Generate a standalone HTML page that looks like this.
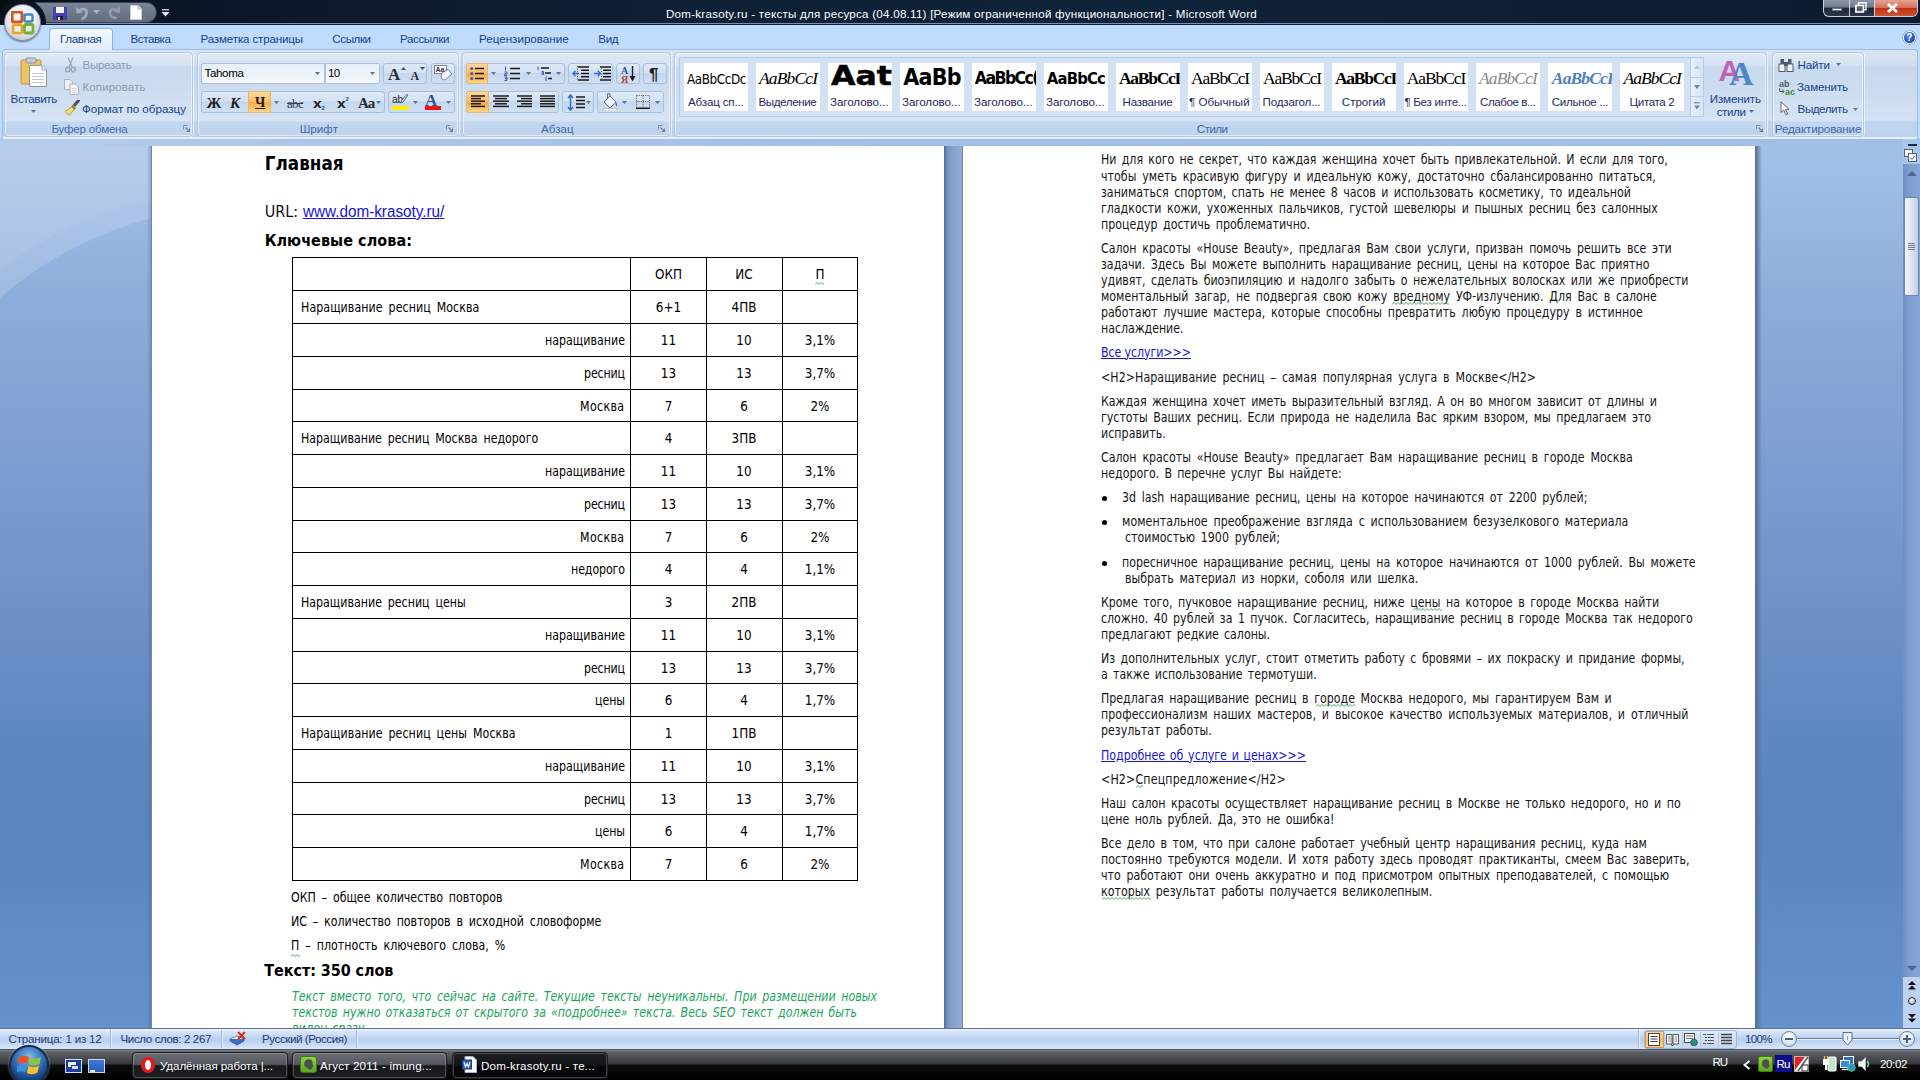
<!DOCTYPE html><html><head><meta charset="utf-8"><title>Dom-krasoty.ru - Microsoft Word</title><style>html,body{margin:0;padding:0}body{width:1920px;height:1080px;overflow:hidden;position:relative;background:#bfdbff;font-family:"Liberation Sans",sans-serif}div,span,svg{box-sizing:border-box}</style></head><body><div style="position:absolute;left:0px;top:138px;width:1920px;height:890px;background:linear-gradient(#9ebce5 0,#a3c0e7 8px,#9dbbe4 60px,#8dadda 160px,#7799cc 380px,#5f88c0 600px,#5a84bd 680px,#5f8ac4 780px,#6692cc 890px)"></div><svg style="position:absolute;left:0px;top:146px;" width="152" height="260" viewBox="0 0 152 260"><path d="M0 0 H152 V72 C105 84 48 110 0 152 Z" fill="rgba(255,255,255,.17)"/><path d="M0 0 H152 V54 C100 64 40 92 0 124 Z" fill="rgba(255,255,255,.06)"/></svg><div style="position:absolute;left:0px;top:138px;width:1920px;height:8px;background:linear-gradient(90deg,rgba(255,255,255,.22) 0,rgba(255,255,255,.12) 300px,rgba(255,255,255,0) 900px)"></div><div style="position:absolute;left:151px;top:146px;width:794px;height:882px;background:#fff;border-left:1px solid #6f86ad;border-right:1px solid #5a7095"></div><div style="position:absolute;left:962px;top:146px;width:794px;height:882px;background:#fff;border-left:1px solid #6f86ad;border-right:1px solid #5a7095"></div><div style="position:absolute;left:945px;top:146px;width:17px;height:882px;background:linear-gradient(90deg,#5f769c 0,#7a96c2 3px,#87a3cf 9px,#8fabd6 100%)"></div><div style="position:absolute;left:1756px;top:146px;width:6px;height:882px;background:linear-gradient(90deg,#5a7199 0,rgba(110,140,190,.0) 100%)"></div><div style="position:absolute;left:147px;top:146px;width:4px;height:882px;background:linear-gradient(270deg,rgba(70,95,140,.35) 0,rgba(70,95,140,0) 100%)"></div><span style="position:absolute;left:264.70px;top:155.20px;font:normal bold 18.67px 'DejaVu Sans Condensed', 'DejaVu Sans', sans-serif;line-height:1;white-space:pre;color:#000;letter-spacing:0.051px;">Главная</span><span style="position:absolute;left:264.70px;top:203.80px;font:normal normal 16px 'DejaVu Sans Condensed', 'DejaVu Sans', sans-serif;line-height:1;white-space:pre;color:#111;letter-spacing:0.023px;">URL:</span><span style="position:absolute;left:302.50px;top:203.80px;font:normal normal 16px 'Liberation Sans', sans-serif;line-height:1;white-space:pre;color:#1515d0;letter-spacing:-0.012px;transform:scaleX(0.955);transform-origin:0 0;text-decoration:underline">www.dom-krasoty.ru/</span><span style="position:absolute;left:264.70px;top:232.70px;font:normal bold 16px 'DejaVu Sans Condensed', 'DejaVu Sans', sans-serif;line-height:1;white-space:pre;color:#000;letter-spacing:0.060px;">Ключевые слова:</span><div style="position:absolute;left:292px;top:257px;width:566px;height:1px;background:#000"></div><div style="position:absolute;left:292px;top:290px;width:566px;height:1px;background:#000"></div><div style="position:absolute;left:292px;top:323px;width:566px;height:1px;background:#000"></div><div style="position:absolute;left:292px;top:356px;width:566px;height:1px;background:#000"></div><div style="position:absolute;left:292px;top:389px;width:566px;height:1px;background:#000"></div><div style="position:absolute;left:292px;top:421px;width:566px;height:1px;background:#000"></div><div style="position:absolute;left:292px;top:454px;width:566px;height:1px;background:#000"></div><div style="position:absolute;left:292px;top:487px;width:566px;height:1px;background:#000"></div><div style="position:absolute;left:292px;top:520px;width:566px;height:1px;background:#000"></div><div style="position:absolute;left:292px;top:552px;width:566px;height:1px;background:#000"></div><div style="position:absolute;left:292px;top:585px;width:566px;height:1px;background:#000"></div><div style="position:absolute;left:292px;top:618px;width:566px;height:1px;background:#000"></div><div style="position:absolute;left:292px;top:651px;width:566px;height:1px;background:#000"></div><div style="position:absolute;left:292px;top:683px;width:566px;height:1px;background:#000"></div><div style="position:absolute;left:292px;top:716px;width:566px;height:1px;background:#000"></div><div style="position:absolute;left:292px;top:749px;width:566px;height:1px;background:#000"></div><div style="position:absolute;left:292px;top:782px;width:566px;height:1px;background:#000"></div><div style="position:absolute;left:292px;top:814px;width:566px;height:1px;background:#000"></div><div style="position:absolute;left:292px;top:847px;width:566px;height:1px;background:#000"></div><div style="position:absolute;left:292px;top:880px;width:566px;height:1px;background:#000"></div><div style="position:absolute;left:292px;top:257px;width:1px;height:624px;background:#000"></div><div style="position:absolute;left:630px;top:257px;width:1px;height:624px;background:#000"></div><div style="position:absolute;left:706px;top:257px;width:1px;height:624px;background:#000"></div><div style="position:absolute;left:782px;top:257px;width:1px;height:624px;background:#000"></div><div style="position:absolute;left:857px;top:257px;width:1px;height:624px;background:#000"></div><span style="position:absolute;left:655.02px;top:267.80px;font:normal normal 13.33px 'DejaVu Sans Condensed', 'DejaVu Sans', sans-serif;line-height:1;white-space:pre;color:#000;">ОКП</span><span style="position:absolute;left:735.33px;top:267.80px;font:normal normal 13.33px 'DejaVu Sans Condensed', 'DejaVu Sans', sans-serif;line-height:1;white-space:pre;color:#000;">ИС</span><span style="position:absolute;left:815.48px;top:267.80px;font:normal normal 13.33px 'DejaVu Sans Condensed', 'DejaVu Sans', sans-serif;line-height:1;white-space:pre;color:#000;">П</span><span style="position:absolute;left:301.30px;top:301.00px;font:normal normal 13.33px 'DejaVu Sans Condensed', 'DejaVu Sans', sans-serif;line-height:1;white-space:pre;color:#000;letter-spacing:0.085px;word-spacing:2.500px;transform:scaleX(0.92);transform-origin:0 0;">Наращивание ресниц Москва</span><span style="position:absolute;left:655.84px;top:300.80px;font:normal normal 13.33px 'DejaVu Sans Condensed', 'DejaVu Sans', sans-serif;line-height:1;white-space:pre;color:#000;">6+1</span><span style="position:absolute;left:731.56px;top:300.80px;font:normal normal 13.33px 'DejaVu Sans Condensed', 'DejaVu Sans', sans-serif;line-height:1;white-space:pre;color:#000;">4ПВ</span><span style="position:absolute;left:544.70px;top:334.00px;font:normal normal 13.33px 'DejaVu Sans Condensed', 'DejaVu Sans', sans-serif;line-height:1;white-space:pre;color:#000;letter-spacing:0.026px;transform:scaleX(0.92);transform-origin:0 0;">наращивание</span><span style="position:absolute;left:660.87px;top:333.80px;font:normal normal 13.33px 'DejaVu Sans Condensed', 'DejaVu Sans', sans-serif;line-height:1;white-space:pre;color:#000;">11</span><span style="position:absolute;left:736.37px;top:333.80px;font:normal normal 13.33px 'DejaVu Sans Condensed', 'DejaVu Sans', sans-serif;line-height:1;white-space:pre;color:#000;">10</span><span style="position:absolute;left:804.77px;top:333.80px;font:normal normal 13.33px 'DejaVu Sans Condensed', 'DejaVu Sans', sans-serif;line-height:1;white-space:pre;color:#000;">3,1%</span><span style="position:absolute;left:583.70px;top:367.00px;font:normal normal 13.33px 'DejaVu Sans Condensed', 'DejaVu Sans', sans-serif;line-height:1;white-space:pre;color:#000;letter-spacing:-0.138px;transform:scaleX(0.92);transform-origin:0 0;">ресниц</span><span style="position:absolute;left:660.87px;top:366.80px;font:normal normal 13.33px 'DejaVu Sans Condensed', 'DejaVu Sans', sans-serif;line-height:1;white-space:pre;color:#000;">13</span><span style="position:absolute;left:736.37px;top:366.80px;font:normal normal 13.33px 'DejaVu Sans Condensed', 'DejaVu Sans', sans-serif;line-height:1;white-space:pre;color:#000;">13</span><span style="position:absolute;left:804.77px;top:366.80px;font:normal normal 13.33px 'DejaVu Sans Condensed', 'DejaVu Sans', sans-serif;line-height:1;white-space:pre;color:#000;">3,7%</span><span style="position:absolute;left:580.20px;top:400.00px;font:normal normal 13.33px 'DejaVu Sans Condensed', 'DejaVu Sans', sans-serif;line-height:1;white-space:pre;color:#000;letter-spacing:0.405px;transform:scaleX(0.92);transform-origin:0 0;">Москва</span><span style="position:absolute;left:664.68px;top:399.80px;font:normal normal 13.33px 'DejaVu Sans Condensed', 'DejaVu Sans', sans-serif;line-height:1;white-space:pre;color:#000;">7</span><span style="position:absolute;left:740.18px;top:399.80px;font:normal normal 13.33px 'DejaVu Sans Condensed', 'DejaVu Sans', sans-serif;line-height:1;white-space:pre;color:#000;">6</span><span style="position:absolute;left:810.48px;top:399.80px;font:normal normal 13.33px 'DejaVu Sans Condensed', 'DejaVu Sans', sans-serif;line-height:1;white-space:pre;color:#000;">2%</span><span style="position:absolute;left:301.30px;top:432.00px;font:normal normal 13.33px 'DejaVu Sans Condensed', 'DejaVu Sans', sans-serif;line-height:1;white-space:pre;color:#000;letter-spacing:0.009px;word-spacing:2.500px;transform:scaleX(0.92);transform-origin:0 0;">Наращивание ресниц Москва недорого</span><span style="position:absolute;left:664.68px;top:431.80px;font:normal normal 13.33px 'DejaVu Sans Condensed', 'DejaVu Sans', sans-serif;line-height:1;white-space:pre;color:#000;">4</span><span style="position:absolute;left:731.56px;top:431.80px;font:normal normal 13.33px 'DejaVu Sans Condensed', 'DejaVu Sans', sans-serif;line-height:1;white-space:pre;color:#000;">3ПВ</span><span style="position:absolute;left:544.70px;top:465.00px;font:normal normal 13.33px 'DejaVu Sans Condensed', 'DejaVu Sans', sans-serif;line-height:1;white-space:pre;color:#000;letter-spacing:0.026px;transform:scaleX(0.92);transform-origin:0 0;">наращивание</span><span style="position:absolute;left:660.87px;top:464.80px;font:normal normal 13.33px 'DejaVu Sans Condensed', 'DejaVu Sans', sans-serif;line-height:1;white-space:pre;color:#000;">11</span><span style="position:absolute;left:736.37px;top:464.80px;font:normal normal 13.33px 'DejaVu Sans Condensed', 'DejaVu Sans', sans-serif;line-height:1;white-space:pre;color:#000;">10</span><span style="position:absolute;left:804.77px;top:464.80px;font:normal normal 13.33px 'DejaVu Sans Condensed', 'DejaVu Sans', sans-serif;line-height:1;white-space:pre;color:#000;">3,1%</span><span style="position:absolute;left:583.70px;top:498.00px;font:normal normal 13.33px 'DejaVu Sans Condensed', 'DejaVu Sans', sans-serif;line-height:1;white-space:pre;color:#000;letter-spacing:-0.138px;transform:scaleX(0.92);transform-origin:0 0;">ресниц</span><span style="position:absolute;left:660.87px;top:497.80px;font:normal normal 13.33px 'DejaVu Sans Condensed', 'DejaVu Sans', sans-serif;line-height:1;white-space:pre;color:#000;">13</span><span style="position:absolute;left:736.37px;top:497.80px;font:normal normal 13.33px 'DejaVu Sans Condensed', 'DejaVu Sans', sans-serif;line-height:1;white-space:pre;color:#000;">13</span><span style="position:absolute;left:804.77px;top:497.80px;font:normal normal 13.33px 'DejaVu Sans Condensed', 'DejaVu Sans', sans-serif;line-height:1;white-space:pre;color:#000;">3,7%</span><span style="position:absolute;left:580.20px;top:531.00px;font:normal normal 13.33px 'DejaVu Sans Condensed', 'DejaVu Sans', sans-serif;line-height:1;white-space:pre;color:#000;letter-spacing:0.405px;transform:scaleX(0.92);transform-origin:0 0;">Москва</span><span style="position:absolute;left:664.68px;top:530.80px;font:normal normal 13.33px 'DejaVu Sans Condensed', 'DejaVu Sans', sans-serif;line-height:1;white-space:pre;color:#000;">7</span><span style="position:absolute;left:740.18px;top:530.80px;font:normal normal 13.33px 'DejaVu Sans Condensed', 'DejaVu Sans', sans-serif;line-height:1;white-space:pre;color:#000;">6</span><span style="position:absolute;left:810.48px;top:530.80px;font:normal normal 13.33px 'DejaVu Sans Condensed', 'DejaVu Sans', sans-serif;line-height:1;white-space:pre;color:#000;">2%</span><span style="position:absolute;left:570.70px;top:563.00px;font:normal normal 13.33px 'DejaVu Sans Condensed', 'DejaVu Sans', sans-serif;line-height:1;white-space:pre;color:#000;letter-spacing:-0.093px;transform:scaleX(0.92);transform-origin:0 0;">недорого</span><span style="position:absolute;left:664.68px;top:562.80px;font:normal normal 13.33px 'DejaVu Sans Condensed', 'DejaVu Sans', sans-serif;line-height:1;white-space:pre;color:#000;">4</span><span style="position:absolute;left:740.18px;top:562.80px;font:normal normal 13.33px 'DejaVu Sans Condensed', 'DejaVu Sans', sans-serif;line-height:1;white-space:pre;color:#000;">4</span><span style="position:absolute;left:804.77px;top:562.80px;font:normal normal 13.33px 'DejaVu Sans Condensed', 'DejaVu Sans', sans-serif;line-height:1;white-space:pre;color:#000;">1,1%</span><span style="position:absolute;left:301.30px;top:596.00px;font:normal normal 13.33px 'DejaVu Sans Condensed', 'DejaVu Sans', sans-serif;line-height:1;white-space:pre;color:#000;letter-spacing:0.014px;word-spacing:2.500px;transform:scaleX(0.92);transform-origin:0 0;">Наращивание ресниц цены</span><span style="position:absolute;left:664.68px;top:595.80px;font:normal normal 13.33px 'DejaVu Sans Condensed', 'DejaVu Sans', sans-serif;line-height:1;white-space:pre;color:#000;">3</span><span style="position:absolute;left:731.56px;top:595.80px;font:normal normal 13.33px 'DejaVu Sans Condensed', 'DejaVu Sans', sans-serif;line-height:1;white-space:pre;color:#000;">2ПВ</span><span style="position:absolute;left:544.70px;top:629.00px;font:normal normal 13.33px 'DejaVu Sans Condensed', 'DejaVu Sans', sans-serif;line-height:1;white-space:pre;color:#000;letter-spacing:0.026px;transform:scaleX(0.92);transform-origin:0 0;">наращивание</span><span style="position:absolute;left:660.87px;top:628.80px;font:normal normal 13.33px 'DejaVu Sans Condensed', 'DejaVu Sans', sans-serif;line-height:1;white-space:pre;color:#000;">11</span><span style="position:absolute;left:736.37px;top:628.80px;font:normal normal 13.33px 'DejaVu Sans Condensed', 'DejaVu Sans', sans-serif;line-height:1;white-space:pre;color:#000;">10</span><span style="position:absolute;left:804.77px;top:628.80px;font:normal normal 13.33px 'DejaVu Sans Condensed', 'DejaVu Sans', sans-serif;line-height:1;white-space:pre;color:#000;">3,1%</span><span style="position:absolute;left:583.70px;top:662.00px;font:normal normal 13.33px 'DejaVu Sans Condensed', 'DejaVu Sans', sans-serif;line-height:1;white-space:pre;color:#000;letter-spacing:-0.138px;transform:scaleX(0.92);transform-origin:0 0;">ресниц</span><span style="position:absolute;left:660.87px;top:661.80px;font:normal normal 13.33px 'DejaVu Sans Condensed', 'DejaVu Sans', sans-serif;line-height:1;white-space:pre;color:#000;">13</span><span style="position:absolute;left:736.37px;top:661.80px;font:normal normal 13.33px 'DejaVu Sans Condensed', 'DejaVu Sans', sans-serif;line-height:1;white-space:pre;color:#000;">13</span><span style="position:absolute;left:804.77px;top:661.80px;font:normal normal 13.33px 'DejaVu Sans Condensed', 'DejaVu Sans', sans-serif;line-height:1;white-space:pre;color:#000;">3,7%</span><span style="position:absolute;left:594.70px;top:694.00px;font:normal normal 13.33px 'DejaVu Sans Condensed', 'DejaVu Sans', sans-serif;line-height:1;white-space:pre;color:#000;letter-spacing:-0.063px;transform:scaleX(0.92);transform-origin:0 0;">цены</span><span style="position:absolute;left:664.68px;top:693.80px;font:normal normal 13.33px 'DejaVu Sans Condensed', 'DejaVu Sans', sans-serif;line-height:1;white-space:pre;color:#000;">6</span><span style="position:absolute;left:740.18px;top:693.80px;font:normal normal 13.33px 'DejaVu Sans Condensed', 'DejaVu Sans', sans-serif;line-height:1;white-space:pre;color:#000;">4</span><span style="position:absolute;left:804.77px;top:693.80px;font:normal normal 13.33px 'DejaVu Sans Condensed', 'DejaVu Sans', sans-serif;line-height:1;white-space:pre;color:#000;">1,7%</span><span style="position:absolute;left:301.30px;top:727.00px;font:normal normal 13.33px 'DejaVu Sans Condensed', 'DejaVu Sans', sans-serif;line-height:1;white-space:pre;color:#000;letter-spacing:0.081px;word-spacing:2.500px;transform:scaleX(0.92);transform-origin:0 0;">Наращивание ресниц цены Москва</span><span style="position:absolute;left:664.68px;top:726.80px;font:normal normal 13.33px 'DejaVu Sans Condensed', 'DejaVu Sans', sans-serif;line-height:1;white-space:pre;color:#000;">1</span><span style="position:absolute;left:731.56px;top:726.80px;font:normal normal 13.33px 'DejaVu Sans Condensed', 'DejaVu Sans', sans-serif;line-height:1;white-space:pre;color:#000;">1ПВ</span><span style="position:absolute;left:544.70px;top:760.00px;font:normal normal 13.33px 'DejaVu Sans Condensed', 'DejaVu Sans', sans-serif;line-height:1;white-space:pre;color:#000;letter-spacing:0.026px;transform:scaleX(0.92);transform-origin:0 0;">наращивание</span><span style="position:absolute;left:660.87px;top:759.80px;font:normal normal 13.33px 'DejaVu Sans Condensed', 'DejaVu Sans', sans-serif;line-height:1;white-space:pre;color:#000;">11</span><span style="position:absolute;left:736.37px;top:759.80px;font:normal normal 13.33px 'DejaVu Sans Condensed', 'DejaVu Sans', sans-serif;line-height:1;white-space:pre;color:#000;">10</span><span style="position:absolute;left:804.77px;top:759.80px;font:normal normal 13.33px 'DejaVu Sans Condensed', 'DejaVu Sans', sans-serif;line-height:1;white-space:pre;color:#000;">3,1%</span><span style="position:absolute;left:583.70px;top:793.00px;font:normal normal 13.33px 'DejaVu Sans Condensed', 'DejaVu Sans', sans-serif;line-height:1;white-space:pre;color:#000;letter-spacing:-0.138px;transform:scaleX(0.92);transform-origin:0 0;">ресниц</span><span style="position:absolute;left:660.87px;top:792.80px;font:normal normal 13.33px 'DejaVu Sans Condensed', 'DejaVu Sans', sans-serif;line-height:1;white-space:pre;color:#000;">13</span><span style="position:absolute;left:736.37px;top:792.80px;font:normal normal 13.33px 'DejaVu Sans Condensed', 'DejaVu Sans', sans-serif;line-height:1;white-space:pre;color:#000;">13</span><span style="position:absolute;left:804.77px;top:792.80px;font:normal normal 13.33px 'DejaVu Sans Condensed', 'DejaVu Sans', sans-serif;line-height:1;white-space:pre;color:#000;">3,7%</span><span style="position:absolute;left:594.70px;top:825.00px;font:normal normal 13.33px 'DejaVu Sans Condensed', 'DejaVu Sans', sans-serif;line-height:1;white-space:pre;color:#000;letter-spacing:-0.063px;transform:scaleX(0.92);transform-origin:0 0;">цены</span><span style="position:absolute;left:664.68px;top:824.80px;font:normal normal 13.33px 'DejaVu Sans Condensed', 'DejaVu Sans', sans-serif;line-height:1;white-space:pre;color:#000;">6</span><span style="position:absolute;left:740.18px;top:824.80px;font:normal normal 13.33px 'DejaVu Sans Condensed', 'DejaVu Sans', sans-serif;line-height:1;white-space:pre;color:#000;">4</span><span style="position:absolute;left:804.77px;top:824.80px;font:normal normal 13.33px 'DejaVu Sans Condensed', 'DejaVu Sans', sans-serif;line-height:1;white-space:pre;color:#000;">1,7%</span><span style="position:absolute;left:580.20px;top:858.00px;font:normal normal 13.33px 'DejaVu Sans Condensed', 'DejaVu Sans', sans-serif;line-height:1;white-space:pre;color:#000;letter-spacing:0.405px;transform:scaleX(0.92);transform-origin:0 0;">Москва</span><span style="position:absolute;left:664.68px;top:857.80px;font:normal normal 13.33px 'DejaVu Sans Condensed', 'DejaVu Sans', sans-serif;line-height:1;white-space:pre;color:#000;">7</span><span style="position:absolute;left:740.18px;top:857.80px;font:normal normal 13.33px 'DejaVu Sans Condensed', 'DejaVu Sans', sans-serif;line-height:1;white-space:pre;color:#000;">6</span><span style="position:absolute;left:810.48px;top:857.80px;font:normal normal 13.33px 'DejaVu Sans Condensed', 'DejaVu Sans', sans-serif;line-height:1;white-space:pre;color:#000;">2%</span><span style="position:absolute;left:290.70px;top:890.70px;font:normal normal 13.33px 'DejaVu Sans Condensed', 'DejaVu Sans', sans-serif;line-height:1;white-space:pre;color:#000;letter-spacing:0.000px;word-spacing:2.488px;transform:scaleX(0.92);transform-origin:0 0;">ОКП – общее количество повторов</span><span style="position:absolute;left:290.70px;top:915.00px;font:normal normal 13.33px 'DejaVu Sans Condensed', 'DejaVu Sans', sans-serif;line-height:1;white-space:pre;color:#000;letter-spacing:0.006px;word-spacing:2.500px;transform:scaleX(0.92);transform-origin:0 0;">ИС – количество повторов в исходной словоформе</span><span style="position:absolute;left:290.70px;top:939.00px;font:normal normal 13.33px 'DejaVu Sans Condensed', 'DejaVu Sans', sans-serif;line-height:1;white-space:pre;color:#000;letter-spacing:0.063px;word-spacing:2.500px;transform:scaleX(0.92);transform-origin:0 0;">П – плотность ключевого слова, %</span><span style="position:absolute;left:264.30px;top:963.00px;font:normal bold 16px 'DejaVu Sans Condensed', 'DejaVu Sans', sans-serif;line-height:1;white-space:pre;color:#000;letter-spacing:-0.076px;">Текст: 350 слов</span><span style="position:absolute;left:291.70px;top:989.70px;font:italic normal 13.33px 'DejaVu Sans Condensed', 'DejaVu Sans', sans-serif;line-height:1;white-space:pre;color:#1aa558;letter-spacing:0.000px;word-spacing:2.298px;transform:scaleX(0.92);transform-origin:0 0;">Текст вместо того, что сейчас на сайте. Текущие тексты неуникальны. При размещении новых</span><span style="position:absolute;left:291.70px;top:1005.70px;font:italic normal 13.33px 'DejaVu Sans Condensed', 'DejaVu Sans', sans-serif;line-height:1;white-space:pre;color:#1aa558;letter-spacing:0.000px;word-spacing:1.808px;transform:scaleX(0.92);transform-origin:0 0;">текстов нужно отказаться от скрытого за «подробнее» текста. Весь SEO текст должен быть</span><span style="position:absolute;left:291.70px;top:1021.70px;font:italic normal 13.33px 'DejaVu Sans Condensed', 'DejaVu Sans', sans-serif;line-height:1;white-space:pre;color:#1aa558;letter-spacing:0.000px;word-spacing:1.593px;transform:scaleX(0.92);transform-origin:0 0;">виден сразу.</span><span style="position:absolute;left:1100.90px;top:152.50px;font:normal normal 13.33px 'DejaVu Sans Condensed', 'DejaVu Sans', sans-serif;line-height:1;white-space:pre;color:#151515;letter-spacing:0.000px;word-spacing:1.891px;transform:scaleX(0.92);transform-origin:0 0;">Ни для кого не секрет, что каждая женщина хочет быть привлекательной. И если для того,</span><span style="position:absolute;left:1100.90px;top:169.50px;font:normal normal 13.33px 'DejaVu Sans Condensed', 'DejaVu Sans', sans-serif;line-height:1;white-space:pre;color:#151515;letter-spacing:0.038px;word-spacing:2.500px;transform:scaleX(0.92);transform-origin:0 0;">чтобы уметь красивую фигуру и идеальную кожу, достаточно сбалансированно питаться,</span><span style="position:absolute;left:1100.90px;top:185.50px;font:normal normal 13.33px 'DejaVu Sans Condensed', 'DejaVu Sans', sans-serif;line-height:1;white-space:pre;color:#151515;letter-spacing:0.000px;word-spacing:2.099px;transform:scaleX(0.92);transform-origin:0 0;">заниматься спортом, спать не менее 8 часов и использовать косметику, то идеальной</span><span style="position:absolute;left:1100.90px;top:201.50px;font:normal normal 13.33px 'DejaVu Sans Condensed', 'DejaVu Sans', sans-serif;line-height:1;white-space:pre;color:#151515;letter-spacing:0.000px;word-spacing:2.448px;transform:scaleX(0.92);transform-origin:0 0;">гладкости кожи, ухоженных пальчиков, густой шевелюры и пышных ресниц без салонных</span><span style="position:absolute;left:1100.90px;top:217.50px;font:normal normal 13.33px 'DejaVu Sans Condensed', 'DejaVu Sans', sans-serif;line-height:1;white-space:pre;color:#151515;letter-spacing:0.000px;word-spacing:2.360px;transform:scaleX(0.92);transform-origin:0 0;">процедур достичь проблематично.</span><span style="position:absolute;left:1100.90px;top:241.50px;font:normal normal 13.33px 'DejaVu Sans Condensed', 'DejaVu Sans', sans-serif;line-height:1;white-space:pre;color:#151515;letter-spacing:0.010px;word-spacing:2.500px;transform:scaleX(0.92);transform-origin:0 0;">Салон красоты «House Beauty», предлагая Вам свои услуги, призван помочь решить все эти</span><span style="position:absolute;left:1100.90px;top:257.50px;font:normal normal 13.33px 'DejaVu Sans Condensed', 'DejaVu Sans', sans-serif;line-height:1;white-space:pre;color:#151515;letter-spacing:0.000px;word-spacing:2.141px;transform:scaleX(0.92);transform-origin:0 0;">задачи. Здесь Вы можете выполнить наращивание ресниц, цены на которое Вас приятно</span><span style="position:absolute;left:1100.90px;top:273.50px;font:normal normal 13.33px 'DejaVu Sans Condensed', 'DejaVu Sans', sans-serif;line-height:1;white-space:pre;color:#151515;letter-spacing:0.000px;word-spacing:2.194px;transform:scaleX(0.92);transform-origin:0 0;">удивят, сделать биоэпиляцию и надолго забыть о нежелательных волосках или же приобрести</span><span style="position:absolute;left:1100.90px;top:289.50px;font:normal normal 13.33px 'DejaVu Sans Condensed', 'DejaVu Sans', sans-serif;line-height:1;white-space:pre;color:#151515;letter-spacing:0.022px;word-spacing:2.500px;transform:scaleX(0.92);transform-origin:0 0;">моментальный загар, не подвергая свою кожу вредному УФ-излучению. Для Вас в салоне</span><span style="position:absolute;left:1100.90px;top:305.50px;font:normal normal 13.33px 'DejaVu Sans Condensed', 'DejaVu Sans', sans-serif;line-height:1;white-space:pre;color:#151515;letter-spacing:0.027px;word-spacing:2.500px;transform:scaleX(0.92);transform-origin:0 0;">работают лучшие мастера, которые способны превратить любую процедуру в истинное</span><span style="position:absolute;left:1100.90px;top:321.50px;font:normal normal 13.33px 'DejaVu Sans Condensed', 'DejaVu Sans', sans-serif;line-height:1;white-space:pre;color:#151515;letter-spacing:-0.044px;transform:scaleX(0.92);transform-origin:0 0;">наслаждение.</span><span style="position:absolute;left:1100.90px;top:345.50px;font:normal normal 13.33px 'DejaVu Sans Condensed', 'DejaVu Sans', sans-serif;line-height:1;white-space:pre;color:#1515d0;letter-spacing:-0.083px;word-spacing:0.000px;transform:scaleX(0.92);transform-origin:0 0;text-decoration:underline">Все услуги&gt;&gt;&gt;</span><span style="position:absolute;left:1100.90px;top:370.50px;font:normal normal 13.33px 'DejaVu Sans Condensed', 'DejaVu Sans', sans-serif;line-height:1;white-space:pre;color:#151515;letter-spacing:0.070px;word-spacing:2.500px;transform:scaleX(0.92);transform-origin:0 0;">&lt;H2&gt;Наращивание ресниц – самая популярная услуга в Москве&lt;/H2&gt;</span><span style="position:absolute;left:1100.90px;top:394.50px;font:normal normal 13.33px 'DejaVu Sans Condensed', 'DejaVu Sans', sans-serif;line-height:1;white-space:pre;color:#151515;letter-spacing:0.000px;word-spacing:2.023px;transform:scaleX(0.92);transform-origin:0 0;">Каждая женщина хочет иметь выразительный взгляд. А он во многом зависит от длины и</span><span style="position:absolute;left:1100.90px;top:410.50px;font:normal normal 13.33px 'DejaVu Sans Condensed', 'DejaVu Sans', sans-serif;line-height:1;white-space:pre;color:#151515;letter-spacing:0.000px;word-spacing:2.133px;transform:scaleX(0.92);transform-origin:0 0;">густоты Ваших ресниц. Если природа не наделила Вас ярким взором, мы предлагаем это</span><span style="position:absolute;left:1100.90px;top:426.50px;font:normal normal 13.33px 'DejaVu Sans Condensed', 'DejaVu Sans', sans-serif;line-height:1;white-space:pre;color:#151515;letter-spacing:0.053px;transform:scaleX(0.92);transform-origin:0 0;">исправить.</span><span style="position:absolute;left:1100.90px;top:450.50px;font:normal normal 13.33px 'DejaVu Sans Condensed', 'DejaVu Sans', sans-serif;line-height:1;white-space:pre;color:#151515;letter-spacing:0.018px;word-spacing:2.500px;transform:scaleX(0.92);transform-origin:0 0;">Салон красоты «House Beauty» предлагает Вам наращивание ресниц в городе Москва</span><span style="position:absolute;left:1100.90px;top:466.50px;font:normal normal 13.33px 'DejaVu Sans Condensed', 'DejaVu Sans', sans-serif;line-height:1;white-space:pre;color:#151515;letter-spacing:0.000px;word-spacing:1.842px;transform:scaleX(0.92);transform-origin:0 0;">недорого. В перечне услуг Вы найдете:</span><div style="position:absolute;left:1101.5px;top:495.5px;width:5px;height:5px;border-radius:50%;background:#000"></div><span style="position:absolute;left:1122.30px;top:490.50px;font:normal normal 13.33px 'DejaVu Sans Condensed', 'DejaVu Sans', sans-serif;line-height:1;white-space:pre;color:#151515;letter-spacing:0.000px;word-spacing:2.296px;transform:scaleX(0.92);transform-origin:0 0;">3d lash наращивание ресниц, цены на которое начинаются от 2200 рублей;</span><div style="position:absolute;left:1101.5px;top:519.5px;width:5px;height:5px;border-radius:50%;background:#000"></div><span style="position:absolute;left:1122.30px;top:514.50px;font:normal normal 13.33px 'DejaVu Sans Condensed', 'DejaVu Sans', sans-serif;line-height:1;white-space:pre;color:#151515;letter-spacing:0.060px;word-spacing:2.500px;transform:scaleX(0.92);transform-origin:0 0;">моментальное преображение взгляда с использованием безузелкового материала</span><span style="position:absolute;left:1125.00px;top:530.50px;font:normal normal 13.33px 'DejaVu Sans Condensed', 'DejaVu Sans', sans-serif;line-height:1;white-space:pre;color:#151515;letter-spacing:0.024px;word-spacing:2.500px;transform:scaleX(0.92);transform-origin:0 0;">стоимостью 1900 рублей;</span><div style="position:absolute;left:1101.5px;top:560.5px;width:5px;height:5px;border-radius:50%;background:#000"></div><span style="position:absolute;left:1122.30px;top:555.50px;font:normal normal 13.33px 'DejaVu Sans Condensed', 'DejaVu Sans', sans-serif;line-height:1;white-space:pre;color:#151515;letter-spacing:0.008px;word-spacing:2.500px;transform:scaleX(0.92);transform-origin:0 0;">поресничное наращивание ресниц, цены на которое начинаются от 1000 рублей. Вы можете</span><span style="position:absolute;left:1125.00px;top:571.50px;font:normal normal 13.33px 'DejaVu Sans Condensed', 'DejaVu Sans', sans-serif;line-height:1;white-space:pre;color:#151515;letter-spacing:0.000px;word-spacing:2.475px;transform:scaleX(0.92);transform-origin:0 0;">выбрать материал из норки, соболя или шелка.</span><span style="position:absolute;left:1100.90px;top:595.50px;font:normal normal 13.33px 'DejaVu Sans Condensed', 'DejaVu Sans', sans-serif;line-height:1;white-space:pre;color:#151515;letter-spacing:0.000px;word-spacing:2.248px;transform:scaleX(0.92);transform-origin:0 0;">Кроме того, пучковое наращивание ресниц, ниже цены на которое в городе Москва найти</span><span style="position:absolute;left:1100.90px;top:611.50px;font:normal normal 13.33px 'DejaVu Sans Condensed', 'DejaVu Sans', sans-serif;line-height:1;white-space:pre;color:#151515;letter-spacing:0.000px;word-spacing:2.068px;transform:scaleX(0.92);transform-origin:0 0;">сложно. 40 рублей за 1 пучок. Согласитесь, наращивание ресниц в городе Москва так недорого</span><span style="position:absolute;left:1100.90px;top:627.50px;font:normal normal 13.33px 'DejaVu Sans Condensed', 'DejaVu Sans', sans-serif;line-height:1;white-space:pre;color:#151515;letter-spacing:0.000px;word-spacing:1.777px;transform:scaleX(0.92);transform-origin:0 0;">предлагают редкие салоны.</span><span style="position:absolute;left:1100.90px;top:651.50px;font:normal normal 13.33px 'DejaVu Sans Condensed', 'DejaVu Sans', sans-serif;line-height:1;white-space:pre;color:#151515;letter-spacing:0.000px;word-spacing:2.146px;transform:scaleX(0.92);transform-origin:0 0;">Из дополнительных услуг, стоит отметить работу с бровями – их покраску и придание формы,</span><span style="position:absolute;left:1100.90px;top:667.50px;font:normal normal 13.33px 'DejaVu Sans Condensed', 'DejaVu Sans', sans-serif;line-height:1;white-space:pre;color:#151515;letter-spacing:0.000px;word-spacing:1.865px;transform:scaleX(0.92);transform-origin:0 0;">а также использование термотуши.</span><span style="position:absolute;left:1100.90px;top:691.50px;font:normal normal 13.33px 'DejaVu Sans Condensed', 'DejaVu Sans', sans-serif;line-height:1;white-space:pre;color:#151515;letter-spacing:0.000px;word-spacing:2.314px;transform:scaleX(0.92);transform-origin:0 0;">Предлагая наращивание ресниц в городе Москва недорого, мы гарантируем Вам и</span><span style="position:absolute;left:1100.90px;top:707.50px;font:normal normal 13.33px 'DejaVu Sans Condensed', 'DejaVu Sans', sans-serif;line-height:1;white-space:pre;color:#151515;letter-spacing:0.065px;word-spacing:2.500px;transform:scaleX(0.92);transform-origin:0 0;">профессионализм наших мастеров, и высокое качество используемых материалов, и отличный</span><span style="position:absolute;left:1100.90px;top:723.50px;font:normal normal 13.33px 'DejaVu Sans Condensed', 'DejaVu Sans', sans-serif;line-height:1;white-space:pre;color:#151515;letter-spacing:0.000px;word-spacing:2.154px;transform:scaleX(0.92);transform-origin:0 0;">результат работы.</span><span style="position:absolute;left:1100.90px;top:748.50px;font:normal normal 13.33px 'DejaVu Sans Condensed', 'DejaVu Sans', sans-serif;line-height:1;white-space:pre;color:#1515d0;letter-spacing:0.000px;word-spacing:1.374px;transform:scaleX(0.92);transform-origin:0 0;text-decoration:underline">Подробнее об услуге и ценах&gt;&gt;&gt;</span><span style="position:absolute;left:1100.90px;top:772.50px;font:normal normal 13.33px 'DejaVu Sans Condensed', 'DejaVu Sans', sans-serif;line-height:1;white-space:pre;color:#151515;letter-spacing:0.177px;transform:scaleX(0.92);transform-origin:0 0;">&lt;H2&gt;Спецпредложение&lt;/H2&gt;</span><span style="position:absolute;left:1100.90px;top:796.50px;font:normal normal 13.33px 'DejaVu Sans Condensed', 'DejaVu Sans', sans-serif;line-height:1;white-space:pre;color:#151515;letter-spacing:0.000px;word-spacing:2.240px;transform:scaleX(0.92);transform-origin:0 0;">Наш салон красоты осуществляет наращивание ресниц в Москве не только недорого, но и по</span><span style="position:absolute;left:1100.90px;top:812.50px;font:normal normal 13.33px 'DejaVu Sans Condensed', 'DejaVu Sans', sans-serif;line-height:1;white-space:pre;color:#151515;letter-spacing:0.000px;word-spacing:1.983px;transform:scaleX(0.92);transform-origin:0 0;">цене ноль рублей. Да, это не ошибка!</span><span style="position:absolute;left:1100.90px;top:836.50px;font:normal normal 13.33px 'DejaVu Sans Condensed', 'DejaVu Sans', sans-serif;line-height:1;white-space:pre;color:#151515;letter-spacing:0.000px;word-spacing:2.117px;transform:scaleX(0.92);transform-origin:0 0;">Все дело в том, что при салоне работает учебный центр наращивания ресниц, куда нам</span><span style="position:absolute;left:1100.90px;top:852.50px;font:normal normal 13.33px 'DejaVu Sans Condensed', 'DejaVu Sans', sans-serif;line-height:1;white-space:pre;color:#151515;letter-spacing:0.000px;word-spacing:2.310px;transform:scaleX(0.92);transform-origin:0 0;">постоянно требуются модели. И хотя работу здесь проводят практиканты, смеем Вас заверить,</span><span style="position:absolute;left:1100.90px;top:868.50px;font:normal normal 13.33px 'DejaVu Sans Condensed', 'DejaVu Sans', sans-serif;line-height:1;white-space:pre;color:#151515;letter-spacing:0.000px;word-spacing:2.474px;transform:scaleX(0.92);transform-origin:0 0;">что работают они очень аккуратно и под присмотром опытных преподавателей, с помощью</span><span style="position:absolute;left:1100.90px;top:884.50px;font:normal normal 13.33px 'DejaVu Sans Condensed', 'DejaVu Sans', sans-serif;line-height:1;white-space:pre;color:#151515;letter-spacing:0.024px;word-spacing:2.500px;transform:scaleX(0.92);transform-origin:0 0;">которых результат работы получается великолепным.</span><svg style="position:absolute;left:1391.5px;top:301.5px;" width="57.5" height="3" viewBox="0 0 57.5 3"><path d="M0 2.5 L2 0.5 L4 2.5 L6 0.5 L8 2.5 L10 0.5 L12 2.5 L14 0.5 L16 2.5 L18 0.5 L20 2.5 L22 0.5 L24 2.5 L26 0.5 L28 2.5 L30 0.5 L32 2.5 L34 0.5 L36 2.5 L38 0.5 L40 2.5 L42 0.5 L44 2.5 L46 0.5 L48 2.5 L50 0.5 L52 2.5 L54 0.5 L56 2.5 L58 0.5" stroke="#3a9a55" stroke-width="0.9" fill="none"/></svg><svg style="position:absolute;left:1412.7px;top:607.5px;" width="29.0" height="3" viewBox="0 0 29.0 3"><path d="M0 2.5 L2 0.5 L4 2.5 L6 0.5 L8 2.5 L10 0.5 L12 2.5 L14 0.5 L16 2.5 L18 0.5 L20 2.5 L22 0.5 L24 2.5 L26 0.5 L28 2.5 L30 0.5" stroke="#3a9a55" stroke-width="0.9" fill="none"/></svg><svg style="position:absolute;left:1316px;top:703.5px;" width="39" height="3" viewBox="0 0 39 3"><path d="M0 2.5 L2 0.5 L4 2.5 L6 0.5 L8 2.5 L10 0.5 L12 2.5 L14 0.5 L16 2.5 L18 0.5 L20 2.5 L22 0.5 L24 2.5 L26 0.5 L28 2.5 L30 0.5 L32 2.5 L34 0.5 L36 2.5 L38 0.5 L40 2.5" stroke="#3a9a55" stroke-width="0.9" fill="none"/></svg><svg style="position:absolute;left:1135.7px;top:784.5px;" width="7.7999999999999545" height="3" viewBox="0 0 7.7999999999999545 3"><path d="M0 2.5 L2 0.5 L4 2.5 L6 0.5 L8 2.5" stroke="#3a9a55" stroke-width="0.9" fill="none"/></svg><svg style="position:absolute;left:1101.7px;top:896.5px;" width="49.0" height="3" viewBox="0 0 49.0 3"><path d="M0 2.5 L2 0.5 L4 2.5 L6 0.5 L8 2.5 L10 0.5 L12 2.5 L14 0.5 L16 2.5 L18 0.5 L20 2.5 L22 0.5 L24 2.5 L26 0.5 L28 2.5 L30 0.5 L32 2.5 L34 0.5 L36 2.5 L38 0.5 L40 2.5 L42 0.5 L44 2.5 L46 0.5 L48 2.5 L50 0.5" stroke="#3a9a55" stroke-width="0.9" fill="none"/></svg><svg style="position:absolute;left:815px;top:282px;" width="9" height="3" viewBox="0 0 9 3"><path d="M0 2.5 L2 0.5 L4 2.5 L6 0.5 L8 2.5 L10 0.5" stroke="#3a9a55" stroke-width="0.9" fill="none"/></svg><svg style="position:absolute;left:291px;top:954px;" width="8.5" height="3" viewBox="0 0 8.5 3"><path d="M0 2.5 L2 0.5 L4 2.5 L6 0.5 L8 2.5 L10 0.5" stroke="#3a9a55" stroke-width="0.9" fill="none"/></svg><div style="position:absolute;left:1903px;top:138px;width:17px;height:890px;background:#a9c6ec"></div><div style="position:absolute;left:1903px;top:164px;width:17px;height:813px;background:linear-gradient(90deg,#6f8fc4 0,#7f9ed0 40%,#86a5d6 100%)"></div><div style="position:absolute;left:1908px;top:144px;width:9px;height:2px;background:#1c2a4a"></div><svg style="position:absolute;left:1904px;top:149px;" width="13" height="13" viewBox="0 0 13 13"><rect x="0.5" y="0.5" width="8" height="7" fill="#fff" stroke="#55627b"/><rect x="4.5" y="4.5" width="8" height="8" fill="#f4f6fa" stroke="#55627b"/><path d="M6.5 9 L8 10.5 L10.5 7" stroke="#55627b" fill="none"/></svg><svg style="position:absolute;left:1907px;top:171px;" width="10" height="5" viewBox="0 0 10 5"><path d="M0 5 L10 5 L5 0 Z" fill="#4c6797"/></svg><div style="position:absolute;left:1904px;top:197px;width:15px;height:99px;border:1px solid #6a86b5;border-radius:2px;background:linear-gradient(90deg,#f3f6fb 0,#dfe6f2 45%,#c3cfe3 100%)"></div><div style="position:absolute;left:1908px;top:243px;width:7px;height:1px;background:#6d7f9f"></div><div style="position:absolute;left:1908px;top:245px;width:7px;height:1px;background:#6d7f9f"></div><div style="position:absolute;left:1908px;top:247px;width:7px;height:1px;background:#6d7f9f"></div><div style="position:absolute;left:1908px;top:249px;width:7px;height:1px;background:#6d7f9f"></div><svg style="position:absolute;left:1907px;top:966px;" width="10" height="5" viewBox="0 0 10 5"><path d="M0 0 L10 0 L5 5 Z" fill="#4c6797"/></svg><div style="position:absolute;left:1903px;top:977px;width:17px;height:51px;background:#bcd3f2"></div><svg style="position:absolute;left:1908px;top:981px;" width="8" height="9" viewBox="0 0 8 9"><path d="M0 4 L8 4 L4 0 Z M0 8.5 L8 8.5 L4 4.5 Z" fill="#111"/></svg><div style="position:absolute;left:1908px;top:997px;width:8px;height:8px;border-radius:50%;background:radial-gradient(circle at 40% 35%,#fff,#9aa3b3);border:1px solid #222"></div><svg style="position:absolute;left:1908px;top:1014px;" width="8" height="9" viewBox="0 0 8 9"><path d="M0 0 L8 0 L4 4 Z M0 4.5 L8 4.5 L4 8.5 Z" fill="#111"/></svg><div style="position:absolute;left:0px;top:0px;width:1920px;height:25px;background:linear-gradient(90deg,#090d16 0,#0b1524 8%,#0e2035 35%,#0f233a 60%,#0c1b2e 100%)"></div><div style="position:absolute;left:0px;top:23px;width:1920px;height:1px;background:#7a8eae"></div><div style="position:absolute;left:0px;top:24px;width:1920px;height:1px;background:#0f1e35"></div><div style="position:absolute;left:0px;top:25px;width:1920px;height:1px;background:#9fb6d6"></div><div style="position:absolute;left:0px;top:26px;width:1920px;height:2px;background:#d6e6fb"></div><div style="position:absolute;left:0px;top:25px;width:1920px;height:25px;background:#bfdbff"></div><div style="position:absolute;left:30px;top:2px;width:127px;height:21px;border-radius:0 11px 11px 0;background:linear-gradient(#7a8494,#626c7c);border:1px solid #3a4250"></div><div style="position:absolute;left:0;top:0;width:60px;height:24px;overflow:hidden"><div style="position:absolute;left:-1px;top:-1px;width:47px;height:47px;border-radius:50%;background:#0b1320"></div></div><div style="position:absolute;left:4px;top:4px;width:37px;height:37px;border-radius:50%;background:radial-gradient(circle at 50% 35%,#ffffff 0,#e9ecf1 45%,#b9c0cb 100%);border:1px solid #7d8696;box-shadow:0 1px 2px rgba(0,0,0,.5)"></div><svg style="position:absolute;left:11px;top:11px;" width="24" height="24" viewBox="0 0 24 24"><rect x="1" y="1" width="10" height="10" rx="2" fill="none" stroke="#d8541e" stroke-width="3"/><rect x="13.5" y="3.5" width="8" height="7" rx="1.5" fill="none" stroke="#3f86c8" stroke-width="2.4"/><rect x="2" y="14" width="9" height="8" rx="1.5" fill="none" stroke="#efa22a" stroke-width="2.6"/><rect x="13.5" y="13.5" width="8.5" height="8.5" rx="1.5" fill="none" stroke="#6eb432" stroke-width="2.8"/></svg><svg style="position:absolute;left:53px;top:7px;" width="14" height="14" viewBox="0 0 14 14"><rect x="0" y="0" width="14" height="13" fill="#4a3fb0"/><rect x="3" y="0" width="8" height="6" fill="#f2f4fa"/><rect x="4" y="9" width="6" height="4" fill="#1b1b4a"/><rect x="5" y="10" width="2" height="3" fill="#dfe3f0"/></svg><svg style="position:absolute;left:75px;top:5px;" width="14" height="15" viewBox="0 0 14 15"><path d="M1 2 L1.5 8.5 L8 7.5 Z" fill="#9aabc6"/><path d="M4 6.5 C6.5 2.5 12 3.5 11.5 8.5 C11.2 11 9.5 13 6.5 14" fill="none" stroke="#9aabc6" stroke-width="2.6"/></svg><svg style="position:absolute;left:93px;top:10px;" width="7" height="5" viewBox="0 0 7 5"><path d="M0 0 L7 0 L3.5 4 Z" fill="#a9b6cb"/></svg><svg style="position:absolute;left:107px;top:5px;" width="14" height="15" viewBox="0 0 14 15"><path d="M13 1.5 L13 8 L6.5 7 Z" fill="#8d9cb6"/><path d="M10 6 C8 3 3 3.5 3 8 C3 11.5 6 13.5 9.5 12.5" fill="none" stroke="#8d9cb6" stroke-width="2.6"/></svg><svg style="position:absolute;left:130px;top:5px;" width="12" height="15" viewBox="0 0 12 15"><path d="M0.5 0.5 L8 0.5 L11.5 4 L11.5 14.5 L0.5 14.5 Z" fill="#ffffff" stroke="#c9ced8" stroke-width="1"/><path d="M8 0.5 L8 4 L11.5 4" fill="#dfe3ea" stroke="#aab0bb" stroke-width=".8"/></svg><svg style="position:absolute;left:161px;top:9px;" width="9" height="8" viewBox="0 0 9 8"><path d="M1 0.8 L8 0.8" stroke="#dfe6f2" stroke-width="1.2"/><path d="M0.5 3 L8.5 3 L4.5 7.5 Z" fill="#dfe6f2"/></svg><span style="position:absolute;left:666.00px;top:7.50px;font:normal normal 11.6px 'Liberation Sans', sans-serif;line-height:1;white-space:pre;color:#fff;letter-spacing:0.244px;">Dom-krasoty.ru - тексты для ресурса (04.08.11) [Режим ограниченной функциональности] - Microsoft Word</span><div style="position:absolute;left:1823px;top:0px;width:95px;height:17px;border-radius:0 0 6px 6px;border:1px solid #c9d2de;border-top:none;background:linear-gradient(#8c96a4 0,#6f7a8a 45%,#1d2737 50%,#2c394b 100%);overflow:hidden"><div style="position:absolute;left:25px;top:0;width:1px;height:17px;background:#c9d2de"></div><div style="position:absolute;left:50px;top:0;width:1px;height:17px;background:#c9d2de"></div><div style="position:absolute;left:51px;top:0;width:44px;height:17px;background:linear-gradient(#e3a595 0,#d2705a 45%,#bf3213 50%,#cf5a36 100%)"></div></div><div style="position:absolute;left:1832px;top:8px;width:10px;height:3px;background:#fff;border:1px solid #6b7583"></div><svg style="position:absolute;left:1855px;top:2px;" width="12" height="11" viewBox="0 0 12 11"><rect x="3.5" y="0.8" width="7.5" height="7" fill="none" stroke="#fff" stroke-width="1.4"/><rect x="0.9" y="3.5" width="7.5" height="6.5" fill="#55606f" stroke="#fff" stroke-width="1.6"/></svg><svg style="position:absolute;left:1886px;top:2.5px;" width="13" height="10" viewBox="0 0 13 10"><path d="M2 1 L11 9 M11 1 L2 9" stroke="#fff" stroke-width="2.8"/></svg><div style="position:absolute;left:1902.5px;top:30.5px;width:13px;height:13px;border-radius:50%;background:radial-gradient(circle at 40% 30%,#5b8de6,#1b46b8 70%,#0d2d8a);border:1.5px solid #f4f8ff;box-shadow:0 0 0 0.6px #6f8fc8"></div><span style="position:absolute;left:1906.20px;top:33.20px;font:normal bold 10px 'Liberation Sans', sans-serif;line-height:1;white-space:pre;color:#fff;">?</span><div style="position:absolute;left:49px;top:28px;width:64px;height:23px;border:1px solid #8fb3e2;border-bottom:none;border-radius:4px 4px 0 0;background:linear-gradient(#f4f8fd 0,#e9f1fb 60%,#dfe9f6 100%)"></div><div style="position:absolute;left:2px;top:49px;width:1916px;height:90px;border:1px solid #9dbbe3;border-bottom:2px solid #e6f0fb;border-radius:4px;background:linear-gradient(#dbe6f4 0,#cfdcee 15px,#c6d7ec 17px,#d3e2f4 70px,#c0d5ef 71px,#bcd1ec 100%)"></div><div style="position:absolute;left:50px;top:49px;width:62px;height:1px;background:#e4edf8"></div><span style="position:absolute;left:60.00px;top:33.00px;font:normal normal 11.6px 'Liberation Sans', sans-serif;line-height:1;white-space:pre;color:#15428b;letter-spacing:-0.377px;">Главная</span><span style="position:absolute;left:130.50px;top:33.00px;font:normal normal 11.6px 'Liberation Sans', sans-serif;line-height:1;white-space:pre;color:#15428b;letter-spacing:-0.442px;">Вставка</span><span style="position:absolute;left:200.50px;top:33.00px;font:normal normal 11.6px 'Liberation Sans', sans-serif;line-height:1;white-space:pre;color:#15428b;letter-spacing:-0.158px;">Разметка страницы</span><span style="position:absolute;left:332.30px;top:33.00px;font:normal normal 11.6px 'Liberation Sans', sans-serif;line-height:1;white-space:pre;color:#15428b;letter-spacing:-0.405px;">Ссылки</span><span style="position:absolute;left:400.00px;top:33.00px;font:normal normal 11.6px 'Liberation Sans', sans-serif;line-height:1;white-space:pre;color:#15428b;letter-spacing:-0.381px;">Рассылки</span><span style="position:absolute;left:479.00px;top:33.00px;font:normal normal 11.6px 'Liberation Sans', sans-serif;line-height:1;white-space:pre;color:#15428b;letter-spacing:0.012px;">Рецензирование</span><span style="position:absolute;left:598.30px;top:33.00px;font:normal normal 11.6px 'Liberation Sans', sans-serif;line-height:1;white-space:pre;color:#15428b;letter-spacing:-0.328px;">Вид</span><div style="position:absolute;left:4px;top:52px;width:189px;height:85px;border:1px solid #b1c7e4;border-radius:4px;background:linear-gradient(#e0eaf6 0,#d5e2f3 12px,#c8d9ee 14px,#cfdef1 45px,#d6e4f5 68px,#c1d6f0 69px,#bfd3ee 84px);box-shadow:inset 0 0 0 1px rgba(255,255,255,.55), 1px 0 0 rgba(255,255,255,.6)"></div><span style="position:absolute;left:51.50px;top:122.50px;font:normal normal 11.6px 'Liberation Sans', sans-serif;line-height:1;white-space:pre;color:#3e6aaa;letter-spacing:-0.232px;">Буфер обмена</span><svg style="position:absolute;left:20px;top:57px;" width="28" height="31" viewBox="0 0 28 31"><rect x="1" y="3" width="20" height="24" rx="1.5" fill="#ecc466" stroke="#b9913d" stroke-width="1"/><rect x="6" y="1" width="10" height="5" rx="1" fill="#c9ccd3" stroke="#7d838f" stroke-width=".8"/><path d="M9.5 8.5 L22 8.5 L26.5 13 L26.5 29.5 L9.5 29.5 Z" fill="#fff" stroke="#8e959f" stroke-width="1"/><path d="M22 8.5 L22 13 L26.5 13" fill="#e4e7ec" stroke="#8e959f" stroke-width=".8"/><path d="M12 16.5 H24 M12 19.5 H24 M12 22.5 H24 M12 25.5 H24" stroke="#c3c8d0" stroke-width="1"/></svg><span style="position:absolute;left:10.50px;top:93.00px;font:normal normal 11.6px 'Liberation Sans', sans-serif;line-height:1;white-space:pre;color:#15428b;letter-spacing:-0.332px;">Вставить</span><svg style="position:absolute;left:31px;top:109.5px;" width="5" height="3" viewBox="0 0 5 3"><path d="M0 0 L5 0 L2.5 3 Z" fill="#5b749b"/></svg><svg style="position:absolute;left:65px;top:57px;" width="11" height="16" viewBox="0 0 11 16"><path d="M3 0.5 L7 10 M8 0.5 L4 10" stroke="#a2adbf" stroke-width="1.4" fill="none"/><circle cx="2.8" cy="12.5" r="2.2" fill="none" stroke="#9aa6ba" stroke-width="1.4"/><circle cx="8.2" cy="12.5" r="2.2" fill="none" stroke="#9aa6ba" stroke-width="1.4"/></svg><span style="position:absolute;left:82.50px;top:59.00px;font:normal normal 11.6px 'Liberation Sans', sans-serif;line-height:1;white-space:pre;color:#8e9bb0;letter-spacing:-0.322px;">Вырезать</span><svg style="position:absolute;left:64px;top:79px;" width="15" height="16" viewBox="0 0 15 16"><path d="M0.5 0.5 H6 L8.5 3 V10.5 H0.5 Z" fill="#eef1f6" stroke="#a9b3c4"/><path d="M6 5 H11.5 L14.5 8 V15.5 H6 Z" fill="#f4f6fa" stroke="#a9b3c4"/><path d="M8 9.5 H12.5 M8 11.5 H12.5 M8 13.5 H12.5" stroke="#c5ccd8" stroke-width=".8"/></svg><span style="position:absolute;left:82.50px;top:81.00px;font:normal normal 11.6px 'Liberation Sans', sans-serif;line-height:1;white-space:pre;color:#8e9bb0;letter-spacing:0.056px;">Копировать</span><svg style="position:absolute;left:64px;top:100px;" width="16" height="17" viewBox="0 0 16 17"><path d="M14.5 0.5 L9 7" stroke="#4a4f5a" stroke-width="3" stroke-linecap="round"/><path d="M9.5 5.5 L11.5 8 L5 15.5 L1 11.5 Z" fill="#f1dc7a" stroke="#b79a2e" stroke-width=".9"/><path d="M8 6.2 L11 9" stroke="#8d6b1f" stroke-width="1.6"/></svg><span style="position:absolute;left:82.00px;top:103.00px;font:normal normal 11.6px 'Liberation Sans', sans-serif;line-height:1;white-space:pre;color:#15428b;letter-spacing:0.002px;">Формат по образцу</span><svg style="position:absolute;left:183px;top:125px;" width="7" height="7" viewBox="0 0 7 7"><path d="M0.5 0.5 L4.5 0.5 M0.5 0.5 L0.5 4.5" stroke="#7a8fb0" stroke-width="1" fill="none"/><path d="M2.5 2.5 L6.5 6.5 M6.5 3.5 L6.5 6.5 L3.5 6.5" stroke="#6b7f9f" stroke-width="1.1" fill="none"/></svg><div style="position:absolute;left:197px;top:52px;width:262px;height:85px;border:1px solid #b1c7e4;border-radius:4px;background:linear-gradient(#e0eaf6 0,#d5e2f3 12px,#c8d9ee 14px,#cfdef1 45px,#d6e4f5 68px,#c1d6f0 69px,#bfd3ee 84px);box-shadow:inset 0 0 0 1px rgba(255,255,255,.55), 1px 0 0 rgba(255,255,255,.6)"></div><span style="position:absolute;left:299.70px;top:122.50px;font:normal normal 11.6px 'Liberation Sans', sans-serif;line-height:1;white-space:pre;color:#3e6aaa;letter-spacing:0.029px;">Шрифт</span><div style="position:absolute;left:201px;top:63px;width:124px;height:21px;border:1px solid #abc1de;background:linear-gradient(#e6eef9,#f6f9fd);border-radius:2px 0 0 2px"></div><span style="position:absolute;left:204.50px;top:67.00px;font:normal normal 11.6px 'Liberation Sans', sans-serif;line-height:1;white-space:pre;color:#000;letter-spacing:-0.375px;">Tahoma</span><svg style="position:absolute;left:315px;top:71.5px;" width="5" height="3" viewBox="0 0 5 3"><path d="M0 0 L5 0 L2.5 3 Z" fill="#5e7394"/></svg><div style="position:absolute;left:325px;top:63px;width:55px;height:21px;border:1px solid #abc1de;background:linear-gradient(#e6eef9,#f6f9fd);border-radius:0 2px 2px 0"></div><span style="position:absolute;left:328.00px;top:67.00px;font:normal normal 11.6px 'Liberation Sans', sans-serif;line-height:1;white-space:pre;color:#000;letter-spacing:-0.703px;">10</span><svg style="position:absolute;left:369.5px;top:71.5px;" width="5" height="3" viewBox="0 0 5 3"><path d="M0 0 L5 0 L2.5 3 Z" fill="#5e7394"/></svg><div style="position:absolute;left:383px;top:63px;width:44px;height:21px;border:1px solid #a8bfde;border-radius:3px;background:linear-gradient(#dfe9f7 0,#d3e1f3 45%,#c4d6ee 50%,#d0dff2 100%);"></div><span style="position:absolute;left:388.00px;top:66.00px;font:normal bold 17px 'Liberation Serif', serif;line-height:1;white-space:pre;color:#262a33;">A</span><svg style="position:absolute;left:400.5px;top:67px;" width="5" height="3" viewBox="0 0 5 3"><path d="M0 3 L5 3 L2.5 0 Z" fill="#3a4f77"/></svg><span style="position:absolute;left:410.50px;top:70.00px;font:normal bold 12px 'Liberation Serif', serif;line-height:1;white-space:pre;color:#262a33;">A</span><svg style="position:absolute;left:420px;top:67px;" width="5" height="3" viewBox="0 0 5 3"><path d="M0 0 L5 0 L2.5 3 Z" fill="#3a4f77"/></svg><div style="position:absolute;left:431px;top:63px;width:24px;height:21px;border:1px solid #a8bfde;border-radius:3px;background:linear-gradient(#dfe9f7 0,#d3e1f3 45%,#c4d6ee 50%,#d0dff2 100%);"></div><svg style="position:absolute;left:434px;top:65px;" width="19" height="17" viewBox="0 0 19 17"><rect x="0.5" y="0.5" width="12" height="8" fill="#fff" stroke="#6d7a92" stroke-width=".9"/><path d="M8 8 L14 4.5 L18 9 L11.5 14.5 Q9 15.5 7.5 13.5 Q6.5 11 8 8 Z" fill="#f3f5f9" stroke="#6a7893" stroke-width=".9"/></svg><span style="position:absolute;left:435.50px;top:66.00px;font:normal bold 7px 'Liberation Sans', sans-serif;line-height:1;white-space:pre;color:#333;">Aa</span><div style="position:absolute;left:201px;top:91px;width:184px;height:22px;border:1px solid #a8bfde;border-radius:3px;background:linear-gradient(#dfe9f7 0,#d3e1f3 45%,#c4d6ee 50%,#d0dff2 100%);"></div><div style="position:absolute;left:248px;top:91px;width:23px;height:22px;background:linear-gradient(#fcd9a0 0,#fbbf67 45%,#fbad45 55%,#fdd68a 100%);border:1px solid #e2b872;"></div><span style="position:absolute;left:206.50px;top:96.00px;font:normal bold 15px 'Liberation Serif', serif;line-height:1;white-space:pre;color:#1c1c1c;letter-spacing:-0.844px;">Ж</span><span style="position:absolute;left:230.00px;top:96.00px;font:italic bold 15px 'Liberation Serif', serif;line-height:1;white-space:pre;color:#1c1c1c;letter-spacing:1.200px;">К</span><span style="position:absolute;left:255.00px;top:96.00px;font:normal bold 14px 'Liberation Serif', serif;line-height:1;white-space:pre;color:#1c1c1c;text-decoration:underline">Ч</span><svg style="position:absolute;left:274px;top:100.5px;" width="5" height="3" viewBox="0 0 5 3"><path d="M0 0 L5 0 L2.5 3 Z" fill="#5b749b"/></svg><span style="position:absolute;left:287.00px;top:97.00px;font:normal normal 13px 'Liberation Serif', serif;line-height:1;white-space:pre;color:#3a4255;letter-spacing:-0.682px;text-decoration:line-through">abc</span><span style="position:absolute;left:312.50px;top:97.00px;font:normal bold 13px 'Liberation Sans', sans-serif;line-height:1;white-space:pre;color:#1c1c1c;transform:scaleX(1.2);transform-origin:0 0;">x</span><span style="position:absolute;left:321.50px;top:105.00px;font:normal bold 6px 'Liberation Sans', sans-serif;line-height:1;white-space:pre;color:#2b4d9a;">2</span><span style="position:absolute;left:336.50px;top:97.00px;font:normal bold 13px 'Liberation Sans', sans-serif;line-height:1;white-space:pre;color:#1c1c1c;transform:scaleX(1.2);transform-origin:0 0;">x</span><span style="position:absolute;left:345.50px;top:96.00px;font:normal bold 6px 'Liberation Sans', sans-serif;line-height:1;white-space:pre;color:#2b4d9a;">2</span><span style="position:absolute;left:358.00px;top:96.00px;font:normal bold 15px 'Liberation Serif', serif;line-height:1;white-space:pre;color:#262a33;letter-spacing:-1.000px;">Aa</span><svg style="position:absolute;left:376px;top:100.5px;" width="5" height="3" viewBox="0 0 5 3"><path d="M0 0 L5 0 L2.5 3 Z" fill="#5b749b"/></svg><div style="position:absolute;left:388px;top:91px;width:67px;height:22px;border:1px solid #a8bfde;border-radius:3px;background:linear-gradient(#dfe9f7 0,#d3e1f3 45%,#c4d6ee 50%,#d0dff2 100%);"></div><span style="position:absolute;left:392.00px;top:95.00px;font:normal normal 10px 'Liberation Sans', sans-serif;line-height:1;white-space:pre;color:#1c1c1c;">ab</span><svg style="position:absolute;left:400px;top:94px;" width="9" height="10" viewBox="0 0 9 10"><path d="M8 1 L3 8 L1 9 L1.5 6.5 L6.5 0.5 Z" fill="#c8d8f3" stroke="#41608f" stroke-width=".9"/></svg><div style="position:absolute;left:392px;top:106px;width:17px;height:4px;background:#ffee00"></div><svg style="position:absolute;left:413px;top:100.5px;" width="5" height="3" viewBox="0 0 5 3"><path d="M0 0 L5 0 L2.5 3 Z" fill="#5b749b"/></svg><span style="position:absolute;left:425.00px;top:92.00px;font:normal bold 17px 'Liberation Serif', serif;line-height:1;white-space:pre;color:#2a5194;">A</span><div style="position:absolute;left:425px;top:106px;width:16px;height:4px;background:#e8141c"></div><svg style="position:absolute;left:446px;top:100.5px;" width="5" height="3" viewBox="0 0 5 3"><path d="M0 0 L5 0 L2.5 3 Z" fill="#5b749b"/></svg><svg style="position:absolute;left:446px;top:125px;" width="7" height="7" viewBox="0 0 7 7"><path d="M0.5 0.5 L4.5 0.5 M0.5 0.5 L0.5 4.5" stroke="#7a8fb0" stroke-width="1" fill="none"/><path d="M2.5 2.5 L6.5 6.5 M6.5 3.5 L6.5 6.5 L3.5 6.5" stroke="#6b7f9f" stroke-width="1.1" fill="none"/></svg><div style="position:absolute;left:462px;top:52px;width:209px;height:85px;border:1px solid #b1c7e4;border-radius:4px;background:linear-gradient(#e0eaf6 0,#d5e2f3 12px,#c8d9ee 14px,#cfdef1 45px,#d6e4f5 68px,#c1d6f0 69px,#bfd3ee 84px);box-shadow:inset 0 0 0 1px rgba(255,255,255,.55), 1px 0 0 rgba(255,255,255,.6)"></div><span style="position:absolute;left:541.00px;top:122.50px;font:normal normal 11.6px 'Liberation Sans', sans-serif;line-height:1;white-space:pre;color:#3e6aaa;letter-spacing:0.034px;">Абзац</span><div style="position:absolute;left:466px;top:63px;width:99px;height:21px;border:1px solid #a8bfde;border-radius:3px;background:linear-gradient(#dfe9f7 0,#d3e1f3 45%,#c4d6ee 50%,#d0dff2 100%);"></div><div style="position:absolute;left:466px;top:63px;width:22px;height:21px;background:linear-gradient(#fcd9a0 0,#fbbf67 45%,#fbad45 55%,#fdd68a 100%);border:1px solid #e2b872;border-radius:3px 0 0 3px;"></div><svg style="position:absolute;left:470px;top:66px;" width="14" height="15" viewBox="0 0 14 15"><circle cx="1.8" cy="2.5" r="1.6" fill="#3b59a8"/><circle cx="1.8" cy="7.5" r="1.6" fill="#3b59a8"/><circle cx="1.8" cy="12.5" r="1.6" fill="#3b59a8"/><path d="M5 2.5 H14 M5 7.5 H14 M5 12.5 H14" stroke="#1a1a1a" stroke-width="1.3"/></svg><svg style="position:absolute;left:491px;top:71.5px;" width="5" height="3" viewBox="0 0 5 3"><path d="M0 0 L5 0 L2.5 3 Z" fill="#5b749b"/></svg><svg style="position:absolute;left:504px;top:66px;" width="16" height="15" viewBox="0 0 16 15"><path d="M6 2.5 H16 M6 7.5 H16 M6 12.5 H16" stroke="#1a1a1a" stroke-width="1.3"/><path d="M1.5 0.5 V4.5 M0.5 6 H3 V8 H0.5 V9.5 H3.2 M0.5 11 H3 V14.5 H0.5 M1 12.7 H3" stroke="#3b59a8" stroke-width="1" fill="none"/></svg><svg style="position:absolute;left:526px;top:71.5px;" width="5" height="3" viewBox="0 0 5 3"><path d="M0 0 L5 0 L2.5 3 Z" fill="#5b749b"/></svg><svg style="position:absolute;left:537px;top:66px;" width="16" height="16" viewBox="0 0 16 16"><path d="M4 2 H12 M8 7 H14 M11 12.5 H15" stroke="#1a1a1a" stroke-width="1.3"/><path d="M1 0.5 V4 M5 5.5 H6.5 V8.5 H5 Z M9 10.5 V15" stroke="#3b59a8" stroke-width="1" fill="none"/></svg><svg style="position:absolute;left:556px;top:71.5px;" width="5" height="3" viewBox="0 0 5 3"><path d="M0 0 L5 0 L2.5 3 Z" fill="#5b749b"/></svg><div style="position:absolute;left:568px;top:63px;width:45px;height:21px;border:1px solid #a8bfde;border-radius:3px;background:linear-gradient(#dfe9f7 0,#d3e1f3 45%,#c4d6ee 50%,#d0dff2 100%);"></div><svg style="position:absolute;left:572px;top:66px;" width="17" height="15" viewBox="0 0 17 15"><path d="M6 1 H17 M9 4.2 H17 M9 7.5 H17 M9 10.8 H17 M6 14 H17" stroke="#1a1a1a" stroke-width="1.5"/><path d="M7 7.5 H0.5 M3.5 4.8 L0.8 7.5 L3.5 10.2" stroke="#3567c4" stroke-width="1.3" fill="none"/><path d="M5.5 0 V15" stroke="#555" stroke-width="1" stroke-dasharray="1 1.5"/></svg><svg style="position:absolute;left:594px;top:66px;" width="17" height="15" viewBox="0 0 17 15"><path d="M6 1 H17 M9 4.2 H17 M9 7.5 H17 M9 10.8 H17 M6 14 H17" stroke="#1a1a1a" stroke-width="1.5"/><path d="M0 7.5 H6.5 M3.8 4.8 L6.5 7.5 L3.8 10.2" stroke="#3567c4" stroke-width="1.3" fill="none"/><path d="M7.5 0 V15" stroke="#555" stroke-width="1" stroke-dasharray="1 1.5"/></svg><div style="position:absolute;left:616px;top:63px;width:24px;height:21px;border:1px solid #a8bfde;border-radius:3px;background:linear-gradient(#dfe9f7 0,#d3e1f3 45%,#c4d6ee 50%,#d0dff2 100%);"></div><span style="position:absolute;left:621.00px;top:65.50px;font:normal bold 10px 'Liberation Serif', serif;line-height:1;white-space:pre;color:#2b4fa0;">A</span><span style="position:absolute;left:621.00px;top:74.50px;font:normal bold 10px 'Liberation Serif', serif;line-height:1;white-space:pre;color:#b5423c;">Я</span><svg style="position:absolute;left:629px;top:66px;" width="7" height="16" viewBox="0 0 7 16"><path d="M3.5 0 V13" stroke="#1a1a1a" stroke-width="1.4"/><path d="M0.5 10 L3.5 15.5 L6.5 10 Z" fill="#1a1a1a"/></svg><div style="position:absolute;left:643px;top:63px;width:24px;height:21px;border:1px solid #a8bfde;border-radius:3px;background:linear-gradient(#dfe9f7 0,#d3e1f3 45%,#c4d6ee 50%,#d0dff2 100%);"></div><span style="position:absolute;left:649.00px;top:66.00px;font:normal bold 17px 'Liberation Sans', sans-serif;line-height:1;white-space:pre;color:#1c1c1c;">¶</span><div style="position:absolute;left:466px;top:91px;width:93px;height:22px;border:1px solid #a8bfde;border-radius:3px;background:linear-gradient(#dfe9f7 0,#d3e1f3 45%,#c4d6ee 50%,#d0dff2 100%);"></div><div style="position:absolute;left:466px;top:91px;width:23px;height:22px;background:linear-gradient(#fcd9a0 0,#fbbf67 45%,#fbad45 55%,#fdd68a 100%);border:1px solid #e2b872;border-radius:3px 0 0 3px;"></div><svg style="position:absolute;left:471px;top:95px;" width="17" height="15" viewBox="0 0 17 15"><path d="M0 1.0 H14" stroke="#1a1a1a" stroke-width="1.5"/><path d="M0 3.6 H10" stroke="#1a1a1a" stroke-width="1.5"/><path d="M0 6.2 H14" stroke="#1a1a1a" stroke-width="1.5"/><path d="M0 8.8 H10" stroke="#1a1a1a" stroke-width="1.5"/><path d="M0 11.4 H14" stroke="#1a1a1a" stroke-width="1.5"/></svg><svg style="position:absolute;left:493px;top:95px;" width="17" height="15" viewBox="0 0 17 15"><path d="M0 1.0 H16" stroke="#1a1a1a" stroke-width="1.5"/><path d="M2 3.6 H14" stroke="#1a1a1a" stroke-width="1.5"/><path d="M0 6.2 H16" stroke="#1a1a1a" stroke-width="1.5"/><path d="M2 8.8 H14" stroke="#1a1a1a" stroke-width="1.5"/><path d="M0 11.4 H16" stroke="#1a1a1a" stroke-width="1.5"/></svg><svg style="position:absolute;left:516px;top:95px;" width="17" height="15" viewBox="0 0 17 15"><path d="M1 1.0 H16" stroke="#1a1a1a" stroke-width="1.5"/><path d="M5 3.6 H16" stroke="#1a1a1a" stroke-width="1.5"/><path d="M1 6.2 H16" stroke="#1a1a1a" stroke-width="1.5"/><path d="M5 8.8 H16" stroke="#1a1a1a" stroke-width="1.5"/><path d="M1 11.4 H16" stroke="#1a1a1a" stroke-width="1.5"/></svg><svg style="position:absolute;left:540px;top:95px;" width="17" height="15" viewBox="0 0 17 15"><path d="M0 1.0 H15" stroke="#1a1a1a" stroke-width="1.5"/><path d="M0 3.6 H15" stroke="#1a1a1a" stroke-width="1.5"/><path d="M0 6.2 H15" stroke="#1a1a1a" stroke-width="1.5"/><path d="M0 8.8 H15" stroke="#1a1a1a" stroke-width="1.5"/><path d="M0 11.4 H15" stroke="#1a1a1a" stroke-width="1.5"/></svg><div style="position:absolute;left:562px;top:91px;width:32px;height:22px;border:1px solid #a8bfde;border-radius:3px;background:linear-gradient(#dfe9f7 0,#d3e1f3 45%,#c4d6ee 50%,#d0dff2 100%);"></div><svg style="position:absolute;left:567px;top:94px;" width="18" height="17" viewBox="0 0 18 17"><path d="M3.5 1 V16 M1 4 L3.5 0.8 L6 4 M1 13 L3.5 16.2 L6 13" stroke="#3567c4" stroke-width="1.4" fill="none"/><path d="M9 3 H18 M9 6.5 H18 M9 10 H18 M9 13.5 H18" stroke="#1a1a1a" stroke-width="1.4"/></svg><svg style="position:absolute;left:586px;top:100.5px;" width="5" height="3" viewBox="0 0 5 3"><path d="M0 0 L5 0 L2.5 3 Z" fill="#5b749b"/></svg><div style="position:absolute;left:597px;top:91px;width:67px;height:22px;border:1px solid #a8bfde;border-radius:3px;background:linear-gradient(#dfe9f7 0,#d3e1f3 45%,#c4d6ee 50%,#d0dff2 100%);"></div><svg style="position:absolute;left:602px;top:93px;" width="16" height="18" viewBox="0 0 16 18"><path d="M2 9 L8 3 L14 9 L8 15 Z" fill="#f4f6fb" stroke="#5a6b8c" stroke-width="1"/><path d="M8 3 V0.8 H5.5 V5" stroke="#5a6b8c" stroke-width="1" fill="none"/><path d="M14 9 Q16 12 14.5 13.5 Q13 12 14 9" fill="#3b6fd0"/><rect x="1" y="15.5" width="14" height="2.5" fill="#fdfdfd" stroke="#a0a8b8" stroke-width=".6"/></svg><svg style="position:absolute;left:622px;top:100.5px;" width="5" height="3" viewBox="0 0 5 3"><path d="M0 0 L5 0 L2.5 3 Z" fill="#5b749b"/></svg><svg style="position:absolute;left:636px;top:95px;" width="14" height="14" viewBox="0 0 14 14"><path d="M0.5 0.5 H13.5 M0.5 0.5 V13 M13.5 0.5 V13 M7 0.5 V13 M0.5 6.5 H13.5" stroke="#555" stroke-width="1" stroke-dasharray="1 1.2" fill="none"/><path d="M0 13.3 H14" stroke="#1a1a1a" stroke-width="1.5"/></svg><svg style="position:absolute;left:655px;top:100.5px;" width="5" height="3" viewBox="0 0 5 3"><path d="M0 0 L5 0 L2.5 3 Z" fill="#5b749b"/></svg><svg style="position:absolute;left:658px;top:125px;" width="7" height="7" viewBox="0 0 7 7"><path d="M0.5 0.5 L4.5 0.5 M0.5 0.5 L0.5 4.5" stroke="#7a8fb0" stroke-width="1" fill="none"/><path d="M2.5 2.5 L6.5 6.5 M6.5 3.5 L6.5 6.5 L3.5 6.5" stroke="#6b7f9f" stroke-width="1.1" fill="none"/></svg><div style="position:absolute;left:674px;top:52px;width:1093px;height:85px;border:1px solid #b1c7e4;border-radius:4px;background:linear-gradient(#e0eaf6 0,#d5e2f3 12px,#c8d9ee 14px,#cfdef1 45px,#d6e4f5 68px,#c1d6f0 69px,#bfd3ee 84px);box-shadow:inset 0 0 0 1px rgba(255,255,255,.55), 1px 0 0 rgba(255,255,255,.6)"></div><span style="position:absolute;left:1196.80px;top:122.50px;font:normal normal 11.6px 'Liberation Sans', sans-serif;line-height:1;white-space:pre;color:#3e6aaa;letter-spacing:-0.541px;">Стили</span><div style="position:absolute;left:679px;top:57px;width:1025px;height:60px;border:1px solid #b5cbe6;background:#d2e1f4"></div><div style="position:absolute;left:1690px;top:57px;width:14px;height:60px;border:1px solid #b5cbe6;background:linear-gradient(90deg,#e8f0fa,#d5e3f5)"></div><div style="position:absolute;left:1690px;top:77px;width:14px;height:1px;background:#b5cbe6"></div><div style="position:absolute;left:1690px;top:96px;width:14px;height:1px;background:#b5cbe6"></div><svg style="position:absolute;left:1694px;top:65px;" width="6" height="4" viewBox="0 0 6 4"><path d="M0 4 L6 4 L3 0 Z" fill="#b7c3d6"/></svg><svg style="position:absolute;left:1694px;top:85px;" width="6" height="4" viewBox="0 0 6 4"><path d="M0 0 L6 0 L3 4 Z" fill="#6f85a8"/></svg><svg style="position:absolute;left:1694px;top:102px;" width="6" height="8" viewBox="0 0 6 8"><path d="M0 0.7 H6" stroke="#6f85a8" stroke-width="1.2"/><path d="M0 3.5 L6 3.5 L3 7.5 Z" fill="#6f85a8"/></svg><div style="position:absolute;left:684px;top:63px;width:64px;height:48px;background:#fff;overflow:hidden"><span style="position:absolute;left:3.00px;top:10.30px;font:normal normal 13.33px 'DejaVu Sans Condensed', 'DejaVu Sans', sans-serif;line-height:1;white-space:pre;color:#000;letter-spacing:-0.398px;">AaBbCcDc</span><span style="position:absolute;left:4.00px;top:33.20px;font:normal normal 11.6px 'Liberation Sans', sans-serif;line-height:1;white-space:pre;color:#1e2a63;letter-spacing:-0.180px;">Абзац сп...</span></div><div style="position:absolute;left:756px;top:63px;width:64px;height:48px;background:#fff;overflow:hidden"><span style="position:absolute;left:3.00px;top:7.30px;font:italic normal 17.5px 'Liberation Serif', serif;line-height:1;white-space:pre;color:#000;letter-spacing:-0.837px;">AaBbCcI</span><span style="position:absolute;left:2.40px;top:33.20px;font:normal normal 11.6px 'Liberation Sans', sans-serif;line-height:1;white-space:pre;color:#1e2a63;letter-spacing:-0.382px;">Выделение</span></div><div style="position:absolute;left:828px;top:63px;width:64px;height:48px;background:#fff;overflow:hidden"><span style="position:absolute;left:2.50px;top:-0.60px;font:normal bold 27px 'DejaVu Sans', sans-serif;line-height:1;white-space:pre;color:#000;transform:scaleX(1.17);transform-origin:0 0;-webkit-text-stroke:0.5px #000;">Aat</span><span style="position:absolute;left:2.00px;top:33.20px;font:normal normal 11.6px 'Liberation Sans', sans-serif;line-height:1;white-space:pre;color:#1e2a63;letter-spacing:-0.064px;">Заголово...</span></div><div style="position:absolute;left:900px;top:63px;width:64px;height:48px;background:#fff;overflow:hidden"><span style="position:absolute;left:3.30px;top:3.40px;font:normal bold 23px 'DejaVu Sans Condensed', 'DejaVu Sans', sans-serif;line-height:1;white-space:pre;color:#000;letter-spacing:-0.766px;">AaBb</span><span style="position:absolute;left:2.00px;top:33.20px;font:normal normal 11.6px 'Liberation Sans', sans-serif;line-height:1;white-space:pre;color:#1e2a63;letter-spacing:-0.064px;">Заголово...</span></div><div style="position:absolute;left:972px;top:63px;width:64px;height:48px;background:#fff;overflow:hidden"><span style="position:absolute;left:2.80px;top:7.30px;font:normal bold 17.5px 'DejaVu Sans Condensed', 'DejaVu Sans', sans-serif;line-height:1;white-space:pre;color:#000;letter-spacing:-1.565px;">AaBbCc(</span><span style="position:absolute;left:2.00px;top:33.20px;font:normal normal 11.6px 'Liberation Sans', sans-serif;line-height:1;white-space:pre;color:#1e2a63;letter-spacing:-0.064px;">Заголово...</span></div><div style="position:absolute;left:1044px;top:63px;width:64px;height:48px;background:#fff;overflow:hidden"><span style="position:absolute;left:2.80px;top:8.30px;font:normal bold 16.5px 'DejaVu Sans Condensed', 'DejaVu Sans', sans-serif;line-height:1;white-space:pre;color:#000;letter-spacing:-0.823px;">AaBbCc</span><span style="position:absolute;left:2.00px;top:33.20px;font:normal normal 11.6px 'Liberation Sans', sans-serif;line-height:1;white-space:pre;color:#1e2a63;letter-spacing:-0.064px;">Заголово...</span></div><div style="position:absolute;left:1116px;top:63px;width:64px;height:48px;background:#fff;overflow:hidden"><span style="position:absolute;left:3.00px;top:7.30px;font:normal bold 17.5px 'Liberation Serif', serif;line-height:1;white-space:pre;color:#000;letter-spacing:-1.288px;">AaBbCcI</span><span style="position:absolute;left:6.60px;top:33.20px;font:normal normal 11.6px 'Liberation Sans', sans-serif;line-height:1;white-space:pre;color:#1e2a63;letter-spacing:-0.252px;">Название</span></div><div style="position:absolute;left:1188px;top:63px;width:64px;height:48px;background:#fff;overflow:hidden"><span style="position:absolute;left:3.00px;top:7.30px;font:normal normal 17.5px 'Liberation Serif', serif;line-height:1;white-space:pre;color:#000;letter-spacing:-1.158px;">AaBbCcI</span><span style="position:absolute;left:1.00px;top:33.20px;font:normal normal 11.6px 'Liberation Sans', sans-serif;line-height:1;white-space:pre;color:#1e2a63;letter-spacing:-0.011px;">¶ Обычный</span></div><div style="position:absolute;left:1260px;top:63px;width:64px;height:48px;background:#fff;overflow:hidden"><span style="position:absolute;left:2.90px;top:7.30px;font:normal normal 17.5px 'Liberation Serif', serif;line-height:1;white-space:pre;color:#000;letter-spacing:-1.144px;">AaBbCcI</span><span style="position:absolute;left:2.50px;top:33.20px;font:normal normal 11.6px 'Liberation Sans', sans-serif;line-height:1;white-space:pre;color:#1e2a63;letter-spacing:-0.160px;">Подзагол...</span></div><div style="position:absolute;left:1332px;top:63px;width:64px;height:48px;background:#fff;overflow:hidden"><span style="position:absolute;left:3.00px;top:7.30px;font:normal bold 17.5px 'Liberation Serif', serif;line-height:1;white-space:pre;color:#000;letter-spacing:-1.288px;">AaBbCcI</span><span style="position:absolute;left:9.80px;top:33.20px;font:normal normal 11.6px 'Liberation Sans', sans-serif;line-height:1;white-space:pre;color:#1e2a63;letter-spacing:-0.024px;">Строгий</span></div><div style="position:absolute;left:1404px;top:63px;width:64px;height:48px;background:#fff;overflow:hidden"><span style="position:absolute;left:2.80px;top:7.30px;font:normal normal 17.5px 'Liberation Serif', serif;line-height:1;white-space:pre;color:#000;letter-spacing:-1.087px;">AaBbCcI</span><span style="position:absolute;left:0.40px;top:33.20px;font:normal normal 11.6px 'Liberation Sans', sans-serif;line-height:1;white-space:pre;color:#1e2a63;letter-spacing:-0.282px;">¶ Без инте...</span></div><div style="position:absolute;left:1476px;top:63px;width:64px;height:48px;background:#fff;overflow:hidden"><span style="position:absolute;left:3.00px;top:7.30px;font:italic normal 17.5px 'Liberation Serif', serif;line-height:1;white-space:pre;color:#8a8a8a;letter-spacing:-0.879px;">AaBbCcI</span><span style="position:absolute;left:4.00px;top:33.20px;font:normal normal 11.6px 'Liberation Sans', sans-serif;line-height:1;white-space:pre;color:#1e2a63;letter-spacing:-0.425px;">Слабое в...</span></div><div style="position:absolute;left:1548px;top:63px;width:64px;height:48px;background:#fff;overflow:hidden"><span style="position:absolute;left:3.80px;top:7.30px;font:italic bold 17.5px 'Liberation Serif', serif;line-height:1;white-space:pre;color:#4f81bd;letter-spacing:-0.844px;">AaBbCcI</span><span style="position:absolute;left:3.80px;top:33.20px;font:normal normal 11.6px 'Liberation Sans', sans-serif;line-height:1;white-space:pre;color:#1e2a63;letter-spacing:-0.331px;">Сильное ...</span></div><div style="position:absolute;left:1620px;top:63px;width:64px;height:48px;background:#fff;overflow:hidden"><span style="position:absolute;left:3.50px;top:7.30px;font:italic normal 17.5px 'Liberation Serif', serif;line-height:1;white-space:pre;color:#000;letter-spacing:-0.951px;">AaBbCcI</span><span style="position:absolute;left:9.60px;top:33.20px;font:normal normal 11.6px 'Liberation Sans', sans-serif;line-height:1;white-space:pre;color:#1e2a63;letter-spacing:-0.379px;">Цитата 2</span></div><span style="position:absolute;left:1718.50px;top:56.00px;font:normal bold 30px 'Liberation Sans', sans-serif;line-height:1;white-space:pre;color:#c063b8;letter-spacing:-1.000px;">A</span><span style="position:absolute;left:1729.00px;top:57.00px;font:normal bold 34px 'Liberation Serif', serif;line-height:1;white-space:pre;color:#4a86c8;letter-spacing:-1.000px;">A</span><span style="position:absolute;left:1709.80px;top:93.00px;font:normal normal 11.6px 'Liberation Sans', sans-serif;line-height:1;white-space:pre;color:#15428b;letter-spacing:-0.162px;">Изменить</span><span style="position:absolute;left:1716.70px;top:106.20px;font:normal normal 11.6px 'Liberation Sans', sans-serif;line-height:1;white-space:pre;color:#15428b;letter-spacing:-0.406px;">стили</span><svg style="position:absolute;left:1749px;top:109.5px;" width="5" height="3" viewBox="0 0 5 3"><path d="M0 0 L5 0 L2.5 3 Z" fill="#5b749b"/></svg><svg style="position:absolute;left:1756px;top:125px;" width="7" height="7" viewBox="0 0 7 7"><path d="M0.5 0.5 L4.5 0.5 M0.5 0.5 L0.5 4.5" stroke="#7a8fb0" stroke-width="1" fill="none"/><path d="M2.5 2.5 L6.5 6.5 M6.5 3.5 L6.5 6.5 L3.5 6.5" stroke="#6b7f9f" stroke-width="1.1" fill="none"/></svg><div style="position:absolute;left:1772px;top:52px;width:92px;height:85px;border:1px solid #b1c7e4;border-radius:4px;background:linear-gradient(#e0eaf6 0,#d5e2f3 12px,#c8d9ee 14px,#cfdef1 45px,#d6e4f5 68px,#c1d6f0 69px,#bfd3ee 84px);box-shadow:inset 0 0 0 1px rgba(255,255,255,.55), 1px 0 0 rgba(255,255,255,.6)"></div><span style="position:absolute;left:1774.80px;top:122.50px;font:normal normal 11.6px 'Liberation Sans', sans-serif;line-height:1;white-space:pre;color:#3e6aaa;letter-spacing:-0.131px;">Редактирование</span><svg style="position:absolute;left:1778px;top:58px;" width="16" height="14" viewBox="0 0 16 14"><rect x="1" y="6" width="6" height="7.5" fill="#f1f3f7" stroke="#4d5a73" stroke-width="1"/><rect x="9" y="6" width="6" height="7.5" fill="#f1f3f7" stroke="#4d5a73" stroke-width="1"/><rect x="2.5" y="1" width="3.5" height="5" fill="#4d5a73"/><rect x="10" y="1" width="3.5" height="5" fill="#4d5a73"/><rect x="6" y="4" width="4" height="4" fill="#4d5a73"/></svg><span style="position:absolute;left:1797.60px;top:58.70px;font:normal normal 11.6px 'Liberation Sans', sans-serif;line-height:1;white-space:pre;color:#15428b;letter-spacing:-0.179px;">Найти</span><svg style="position:absolute;left:1835.5px;top:63px;" width="5" height="3" viewBox="0 0 5 3"><path d="M0 0 L5 0 L2.5 3 Z" fill="#5b749b"/></svg><span style="position:absolute;left:1779.00px;top:79.50px;font:normal bold 9px 'Liberation Sans', sans-serif;line-height:1;white-space:pre;color:#4d5a73;">ab</span><span style="position:absolute;left:1785.00px;top:87.50px;font:normal bold 9px 'Liberation Sans', sans-serif;line-height:1;white-space:pre;color:#3f8a36;">ac</span><svg style="position:absolute;left:1779px;top:88px;" width="6" height="6" viewBox="0 0 6 6"><path d="M0.7 0 V3.5 H5 M3 1.5 L5.2 3.5 L3 5.5" stroke="#4d5a73" stroke-width="1" fill="none"/></svg><span style="position:absolute;left:1797.00px;top:81.00px;font:normal normal 11.6px 'Liberation Sans', sans-serif;line-height:1;white-space:pre;color:#15428b;letter-spacing:-0.139px;">Заменить</span><svg style="position:absolute;left:1780px;top:101px;" width="10" height="15" viewBox="0 0 10 15"><path d="M1 0.8 L1 11.5 L3.7 9 L5.8 13.8 L7.6 13 L5.5 8.4 L9 8.2 Z" fill="#fff" stroke="#4d5a73" stroke-width=".9"/></svg><span style="position:absolute;left:1797.60px;top:103.00px;font:normal normal 11.6px 'Liberation Sans', sans-serif;line-height:1;white-space:pre;color:#15428b;letter-spacing:-0.438px;">Выделить</span><svg style="position:absolute;left:1853px;top:107.5px;" width="5" height="3" viewBox="0 0 5 3"><path d="M0 0 L5 0 L2.5 3 Z" fill="#5b749b"/></svg><div style="position:absolute;left:0px;top:1028px;width:1920px;height:22px;background:linear-gradient(#f2f7fd 0,#d9e7f9 2px,#cadcf5 6px,#b9cff0 10px,#c3d6f2 14px,#d6e4f7 19px,#dfeaf9 21px);border-top:1px solid #5f6f8a"></div><div style="position:absolute;left:0px;top:1049px;width:1920px;height:1px;background:#4d586b"></div><span style="position:absolute;left:8.50px;top:1032.50px;font:normal normal 11.6px 'Liberation Sans', sans-serif;line-height:1;white-space:pre;color:#1f3b73;letter-spacing:-0.210px;">Страница: 1 из 12</span><div style="position:absolute;left:110px;top:1030px;width:1px;height:18px;background:#9db7de"></div><div style="position:absolute;left:111px;top:1030px;width:1px;height:18px;background:#e6effb"></div><span style="position:absolute;left:120.50px;top:1032.50px;font:normal normal 11.6px 'Liberation Sans', sans-serif;line-height:1;white-space:pre;color:#1f3b73;letter-spacing:-0.402px;">Число слов: 2 267</span><div style="position:absolute;left:221px;top:1030px;width:1px;height:18px;background:#9db7de"></div><div style="position:absolute;left:222px;top:1030px;width:1px;height:18px;background:#e6effb"></div><svg style="position:absolute;left:229px;top:1030px;" width="18" height="17" viewBox="0 0 18 17"><path d="M1 9 L8 6 L15 9 L8 13 Z" fill="#fff" stroke="#5a6b8c" stroke-width=".9"/><path d="M1 9 V11 L8 15 L15 11 V9" fill="#3d6fc0" stroke="#2d4f8f" stroke-width=".8"/><path d="M9 2 L16 9 M16 2 L9 9" stroke="#e0281c" stroke-width="2"/></svg><span style="position:absolute;left:262.00px;top:1032.50px;font:normal normal 11.6px 'Liberation Sans', sans-serif;line-height:1;white-space:pre;color:#1f3b73;letter-spacing:-0.437px;">Русский (Россия)</span><div style="position:absolute;left:356px;top:1030px;width:1px;height:18px;background:#9db7de"></div><div style="position:absolute;left:357px;top:1030px;width:1px;height:18px;background:#e6effb"></div><div style="position:absolute;left:1638px;top:1030px;width:1px;height:18px;background:#9db7de"></div><div style="position:absolute;left:1639px;top:1030px;width:1px;height:18px;background:#e6effb"></div><div style="position:absolute;left:1644px;top:1030px;width:93px;height:19px;border:1px solid #9bb5dc;border-radius:3px;background:linear-gradient(#dfe9f8,#c5d7f0)"></div><div style="position:absolute;left:1645px;top:1031px;width:19px;height:17px;background:linear-gradient(#fcd9a0,#fbb85a 55%,#fdd68a);border:1px solid #c7a063"></div><svg style="position:absolute;left:1648px;top:1033px;" width="14" height="13" viewBox="0 0 14 13"><rect x="0.5" y="0.5" width="11" height="12" fill="#fff" stroke="#444"/><path d="M2.5 3.5 H9.5 M2.5 6 H9.5 M2.5 8.5 H9.5" stroke="#444"/></svg><svg style="position:absolute;left:1666px;top:1033px;" width="14" height="13" viewBox="0 0 14 13"><path d="M0.5 1.5 H6 V11 H0.5 Z M7 1.5 H12.5 V11 H7 Z" fill="#fff" stroke="#444" stroke-width=".9"/><path d="M2 4 H5 M2 6 H5 M2 8 H5 M8.5 4 H11 M8.5 6 H11 M8.5 8 H11" stroke="#666" stroke-width=".8"/><path d="M5 11 L6.5 13 L8 11" fill="none" stroke="#444"/></svg><svg style="position:absolute;left:1684px;top:1033px;" width="14" height="13" viewBox="0 0 14 13"><rect x="0.5" y="0.5" width="10" height="9" fill="#fff" stroke="#444"/><path d="M2 3 H9 M2 5.5 H9" stroke="#666"/><circle cx="10" cy="9.5" r="3.3" fill="#2f8f7f" stroke="#1f5f6f"/></svg><svg style="position:absolute;left:1702px;top:1033px;" width="14" height="13" viewBox="0 0 14 13"><path d="M1 1.5 H4 M5 1.5 H12 M3 4.5 H5 M6 4.5 H12 M3 7.5 H5 M6 7.5 H12 M1 10.5 H4 M5 10.5 H12" stroke="#555" stroke-width="1.1"/></svg><svg style="position:absolute;left:1720px;top:1033px;" width="14" height="13" viewBox="0 0 14 13"><path d="M1 1.5 H12 M1 4.5 H12 M1 7.5 H12 M1 10.5 H12" stroke="#444" stroke-width="1.3"/></svg><div style="position:absolute;left:1664px;top:1032px;width:1px;height:15px;background:#b5c8e3"></div><div style="position:absolute;left:1682px;top:1032px;width:1px;height:15px;background:#b5c8e3"></div><div style="position:absolute;left:1700px;top:1032px;width:1px;height:15px;background:#b5c8e3"></div><div style="position:absolute;left:1718px;top:1032px;width:1px;height:15px;background:#b5c8e3"></div><span style="position:absolute;left:1745.00px;top:1032.70px;font:normal normal 11.6px 'Liberation Sans', sans-serif;line-height:1;white-space:pre;color:#1f3b73;letter-spacing:-0.664px;">100%</span><div style="position:absolute;left:1797px;top:1038px;width:102px;height:1px;background:#5f7dab"></div><div style="position:absolute;left:1797px;top:1039px;width:102px;height:1px;background:#e9f1fc"></div><div style="position:absolute;left:1781px;top:1030.5px;width:16px;height:16px;border-radius:50%;background:radial-gradient(circle at 50% 30%,#ffffff,#dbe5f3 60%,#aebfda);border:1px solid #6d83a8"></div><div style="position:absolute;left:1785px;top:1038px;width:8px;height:2px;background:#4a5f86"></div><div style="position:absolute;left:1899px;top:1030.5px;width:16px;height:16px;border-radius:50%;background:radial-gradient(circle at 50% 30%,#ffffff,#dbe5f3 60%,#aebfda);border:1px solid #6d83a8"></div><div style="position:absolute;left:1903px;top:1038px;width:8px;height:2px;background:#4a5f86"></div><div style="position:absolute;left:1906px;top:1035px;width:2px;height:8px;background:#4a5f86"></div><svg style="position:absolute;left:1842px;top:1032px;" width="11" height="14" viewBox="0 0 11 14"><path d="M1 0.5 H10 V8 L5.5 13 L1 8 Z" fill="#e9eff8" stroke="#5a7099" stroke-width="1"/><path d="M5.5 4 V8" stroke="#8fa3c4"/></svg><div style="position:absolute;left:0px;top:1050px;width:1920px;height:30px;background:linear-gradient(#7f8389 0,#5c6066 2px,#4a4d52 8px,#35373b 14px,#0c0c0e 15px,#000 30px)"></div><div style="position:absolute;left:9px;top:1045px;width:40px;height:40px;border-radius:50%;background:radial-gradient(circle at 50% 30%,#8fc0ea 0,#3f7fc4 35%,#18437f 70%,#0a1d40 100%);border:2px solid #1a2b45;box-shadow:0 0 2px #9fc8ee"></div><svg style="position:absolute;left:17px;top:1052px;" width="26" height="26" viewBox="0 0 26 26"><path d="M2 5 Q7 2.5 12 5 L10.5 12 Q6 9.5 0.5 12 Z" fill="#e8542a"/><path d="M13.5 5.5 Q18 8 24 5 L22.5 12 Q17 15 12 12.3 Z" fill="#8cc63e"/><path d="M0 13.5 Q5.5 11 10 13.5 L8.5 20.5 Q4 18 -1.5 20.5 Z" fill="#3c8fe0"/><path d="M11.5 14 Q16.5 16.5 22 13.5 L20.5 20.5 Q15 23.5 10 21 Z" fill="#fbc02a"/></svg><div style="position:absolute;left:65px;top:1059px;width:17px;height:14px;background:#1c3c9c;border:1px solid #cfe0ff"></div><div style="position:absolute;left:68px;top:1062px;width:8px;height:5px;background:#eaf2ff"></div><div style="position:absolute;left:71px;top:1065px;width:8px;height:5px;background:#cfe0ff;border:1px solid #1c3c9c"></div><div style="position:absolute;left:88px;top:1059px;width:17px;height:14px;background:linear-gradient(#3f78d8,#2b5cb8);border:1px solid #cfd8e8"></div><div style="position:absolute;left:90px;top:1070px;width:5px;height:2px;background:#e6ecf6"></div><div style="position:absolute;left:132px;top:1052px;width:156px;height:27px;border:1px solid #1b1c1f;border-radius:4px;background:linear-gradient(#6c7076 0,#54585e 45%,#17181b 52%,#1f2023 100%);box-shadow:inset 0 0 0 1px rgba(255,255,255,.22)"></div><div style="position:absolute;left:292px;top:1052px;width:155px;height:27px;border:1px solid #1b1c1f;border-radius:4px;background:linear-gradient(#6c7076 0,#54585e 45%,#17181b 52%,#1f2023 100%);box-shadow:inset 0 0 0 1px rgba(255,255,255,.22)"></div><div style="position:absolute;left:452px;top:1052px;width:156px;height:27px;border:1px solid #1b1c1f;border-radius:4px;background:linear-gradient(#1d1f23 0,#121316 50%,#050506 52%,#0a0a0c 100%);box-shadow:inset 0 0 0 1px rgba(255,255,255,.22)"></div><div style="position:absolute;left:141px;top:1057px;width:14px;height:16px;border-radius:50%;border:3.5px solid #e21a1a;background:#fff;border-left-width:4px;border-right-width:4px"></div><span style="position:absolute;left:160.00px;top:1059.50px;font:normal normal 11.6px 'Liberation Sans', sans-serif;line-height:1;white-space:pre;color:#fff;letter-spacing:-0.090px;">Удалённая работа |...</span><div style="position:absolute;left:300px;top:1056px;width:17px;height:17px;border-radius:3px;background:linear-gradient(#8ed04a,#5aa61f);border:1px solid #3f7a12"></div><svg style="position:absolute;left:302px;top:1058px;" width="13" height="13" viewBox="0 0 13 13"><path d="M3 3 Q5 0.5 8 1.5 Q11 2 10.5 6 Q12 8 10 10.5 Q8 12.5 6 11 Q5 9 3.5 9 Q1 7 3 3 Z" fill="#4a4f4a"/></svg><span style="position:absolute;left:320.00px;top:1059.50px;font:normal normal 11.6px 'Liberation Sans', sans-serif;line-height:1;white-space:pre;color:#fff;letter-spacing:0.170px;">Агуст 2011 - imung...</span><svg style="position:absolute;left:462px;top:1056px;" width="15" height="17" viewBox="0 0 15 17"><path d="M3 0.5 H11 L14.5 4 V16.5 H3 Z" fill="#fff" stroke="#9fb4d8"/><rect x="0.5" y="4" width="9" height="9" fill="#2b5cb8" stroke="#1b3f8a"/><path d="M2 6 L3.5 11 L5 7.5 L6.5 11 L8 6" stroke="#fff" stroke-width="1.1" fill="none"/></svg><span style="position:absolute;left:481.00px;top:1059.50px;font:normal normal 11.6px 'Liberation Sans', sans-serif;line-height:1;white-space:pre;color:#fff;letter-spacing:0.183px;">Dom-krasoty.ru - те...</span><span style="position:absolute;left:1712.50px;top:1056.00px;font:normal normal 11.6px 'Liberation Sans', sans-serif;line-height:1;white-space:pre;color:#fff;letter-spacing:-1.000px;">RU</span><svg style="position:absolute;left:1743px;top:1060px;" width="8" height="10" viewBox="0 0 8 10"><path d="M6.5 1 L1.5 5 L6.5 9" stroke="#fff" stroke-width="2" fill="none"/></svg><div style="position:absolute;left:1758px;top:1056px;width:15px;height:16px;border-radius:2px;background:linear-gradient(#8ed04a,#5aa61f);border:1px solid #3f7a12"></div><svg style="position:absolute;left:1760px;top:1058px;" width="11" height="12" viewBox="0 0 11 12"><path d="M2.5 3 Q4 0.5 7 1.5 Q9.5 2 9 5.5 Q10.5 7.5 8.5 9.5 Q7 11.5 5 10 Q4 8.5 3 8.5 Q1 6.5 2.5 3 Z" fill="#4a4f4a"/></svg><div style="position:absolute;left:1775px;top:1055px;width:17px;height:17px;background:#0a0a8c"></div><span style="position:absolute;left:1776.50px;top:1058.00px;font:normal normal 11.6px 'Liberation Sans', sans-serif;line-height:1;white-space:pre;color:#fff;letter-spacing:-0.914px;">Ru</span><svg style="position:absolute;left:1794px;top:1056px;" width="15" height="16" viewBox="0 0 15 16"><rect x="0.5" y="0.5" width="14" height="15" fill="#fff" stroke="#bbb"/><path d="M1 1 H11 L1 14 Z" fill="#e3202a"/><path d="M14 1 L4 15" stroke="#555" stroke-width="1.5"/><rect x="8" y="9" width="6" height="6" fill="#fff" stroke="#333"/></svg><svg style="position:absolute;left:1822px;top:1055px;" width="15" height="17" viewBox="0 0 15 17"><rect x="6" y="2" width="8" height="14" rx="1.5" fill="#bfe8c8" stroke="#fff" stroke-width="1.2"/><rect x="1" y="4" width="6" height="6" fill="#fff"/><path d="M2.5 1 V4 M5.5 1 V4" stroke="#e8b54a" stroke-width="1.4"/><path d="M4 10 V15" stroke="#fff" stroke-width="2"/></svg><svg style="position:absolute;left:1840px;top:1056px;" width="16" height="16" viewBox="0 0 16 16"><rect x="3.5" y="0.5" width="10" height="8" fill="#2a6bd0" stroke="#fff"/><rect x="0.5" y="4.5" width="9" height="7" fill="#3f86e0" stroke="#fff"/><circle cx="11.5" cy="11.5" r="3.8" fill="#2f8fd8" stroke="#4fbf5f"/><path d="M2 13.5 H8" stroke="#fff" stroke-width="1.3"/></svg><svg style="position:absolute;left:1858px;top:1056px;" width="13" height="16" viewBox="0 0 13 16"><path d="M0.5 5.5 H3.5 L7.5 1.5 V14.5 L3.5 10.5 H0.5 Z" fill="#f4f4f4" stroke="#ccc" stroke-width=".6"/><path d="M9.5 5 Q11.5 8 9.5 11" stroke="#7fd08a" stroke-width="1.4" fill="none"/></svg><span style="position:absolute;left:1880.00px;top:1058.00px;font:normal normal 11.6px 'Liberation Sans', sans-serif;line-height:1;white-space:pre;color:#fff;letter-spacing:-0.403px;">20:02</span></body></html>
